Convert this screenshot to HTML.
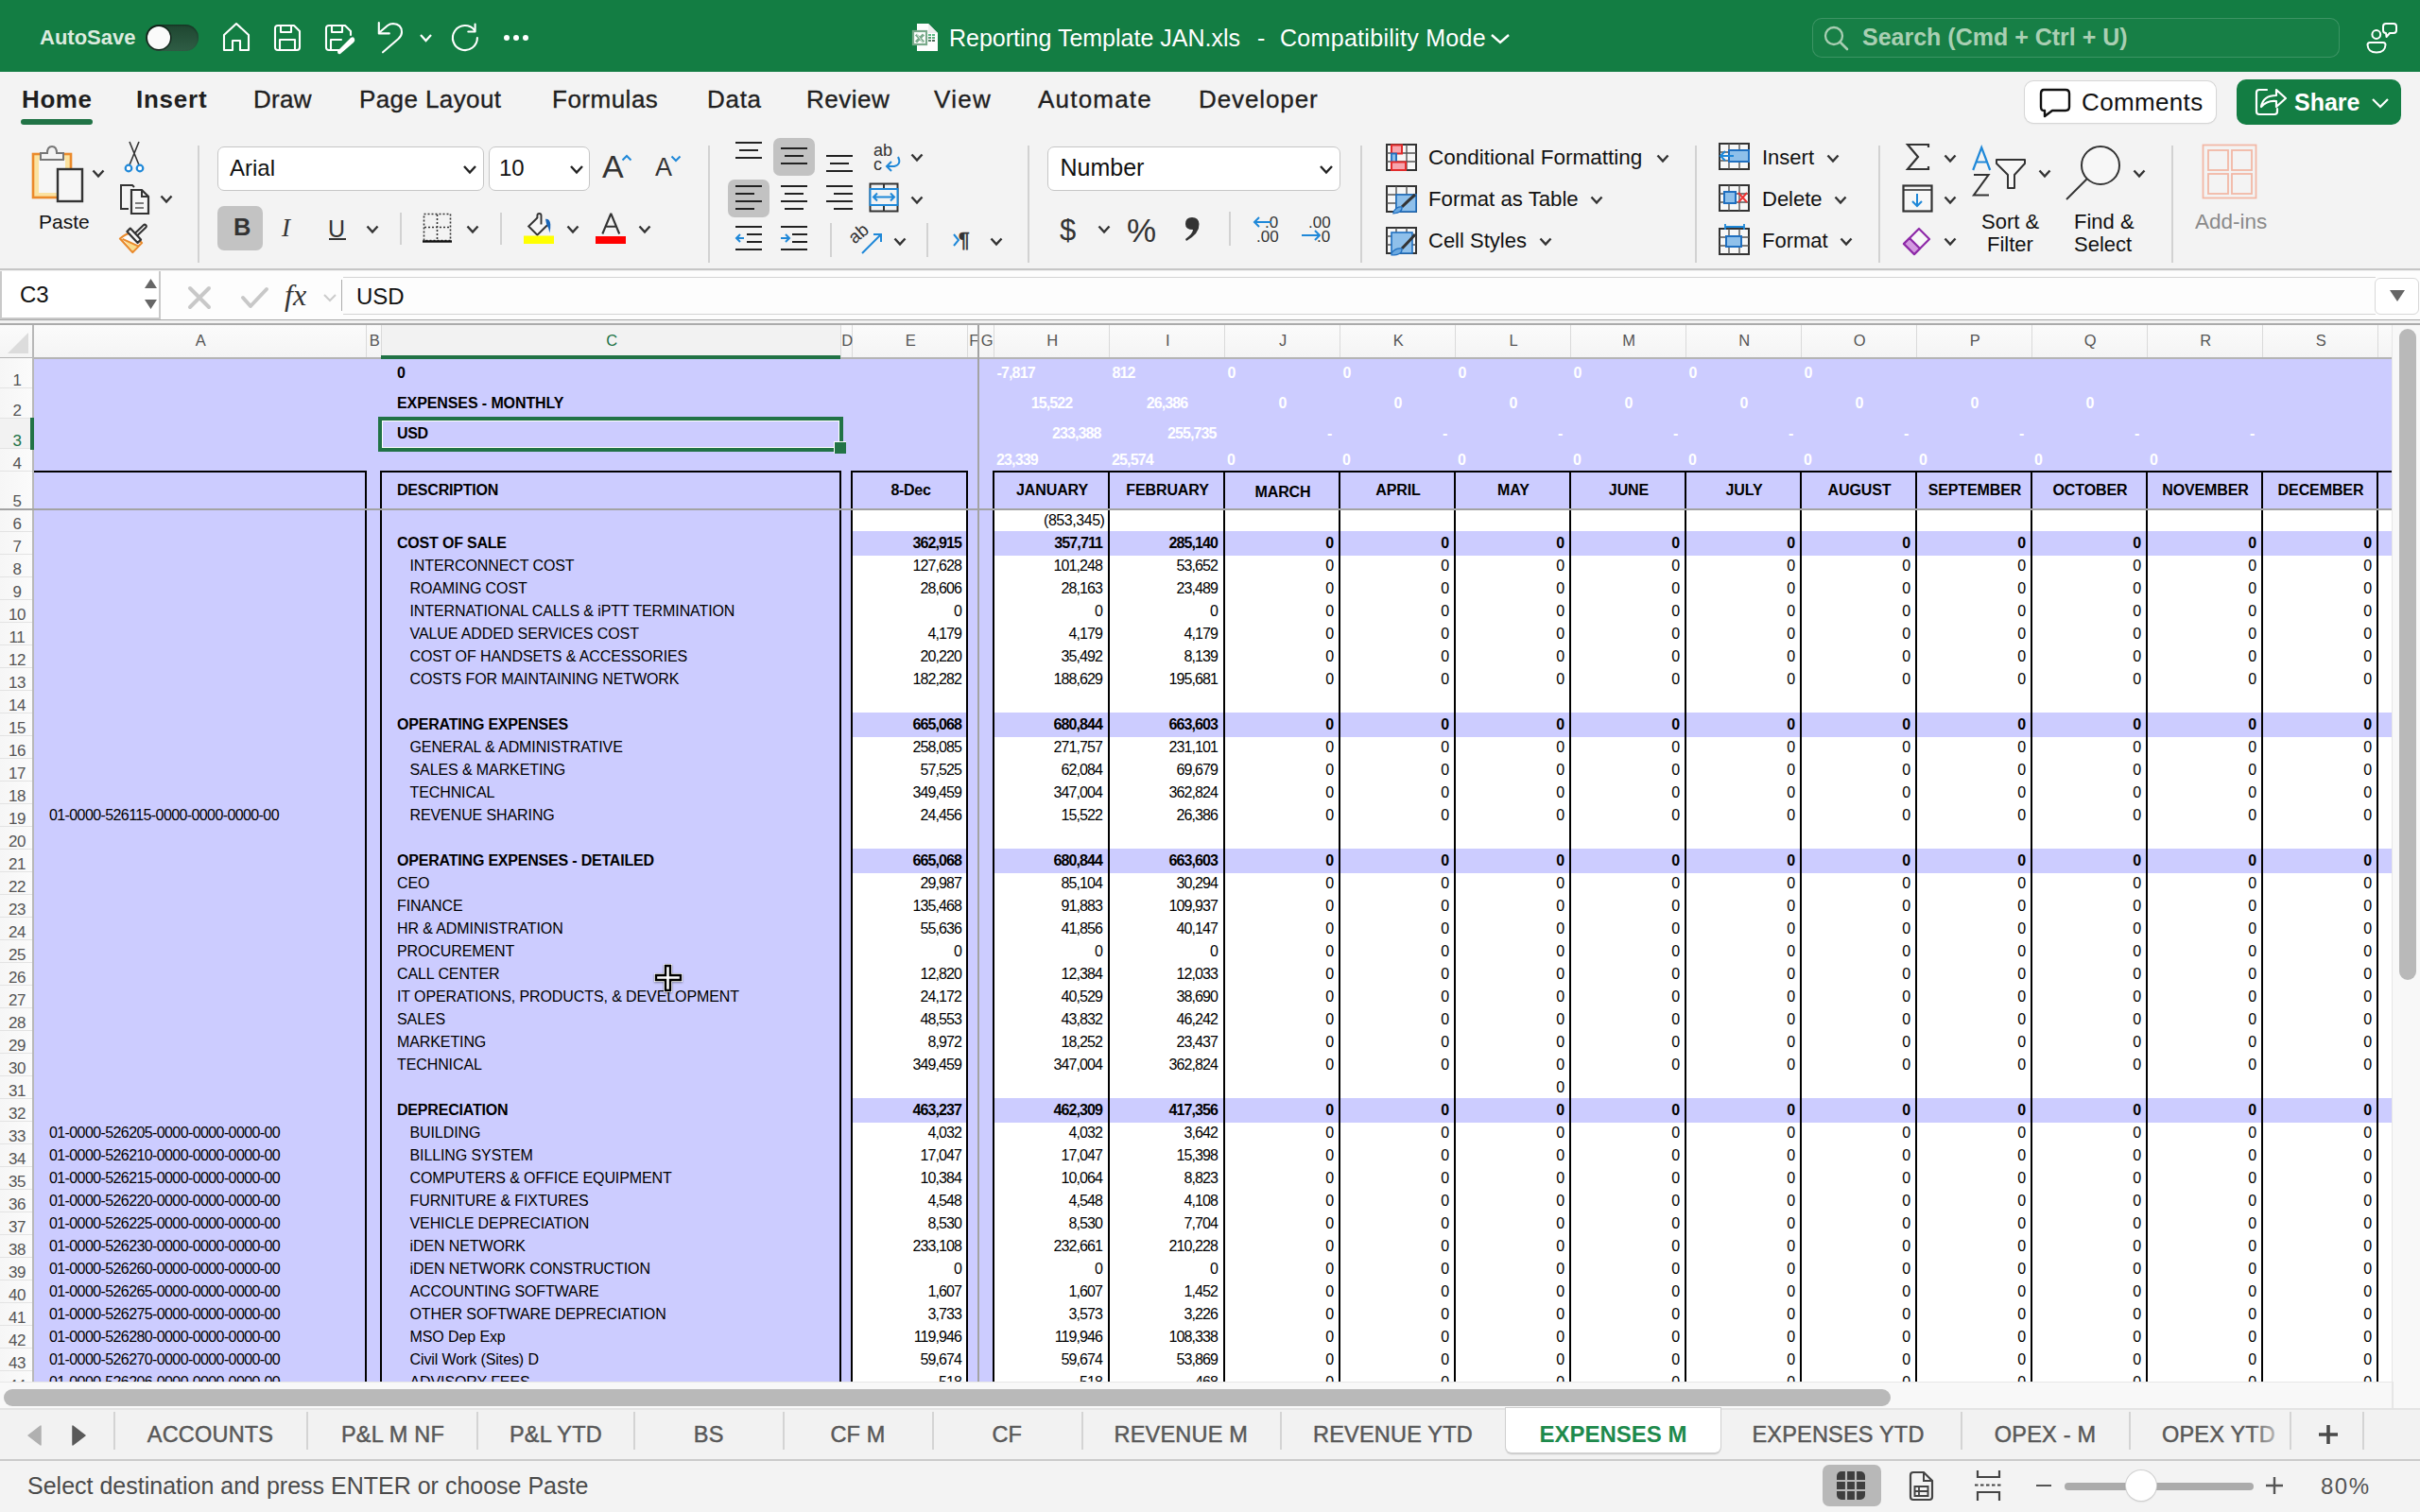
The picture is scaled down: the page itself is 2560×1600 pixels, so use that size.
<!DOCTYPE html><html><head><meta charset="utf-8"><style>
html,body{margin:0;padding:0;width:2560px;height:1600px;overflow:hidden;background:#f3f3f3;font-family:"Liberation Sans", sans-serif;}
.t{position:absolute;white-space:pre;line-height:1;}
.r{position:absolute;}
.s{position:absolute;overflow:visible;}
</style></head><body>
<div class="r" style="left:0px;top:0px;width:2560px;height:76px;background:#137d43;"></div>
<div class="t" style="top:29.41px;font-size:22px;font-weight:bold;color:#dcebdf;left:42.00px;">AutoSave</div>
<div class="r" style="left:154px;top:26px;width:56px;height:28px;background:linear-gradient(#1e4630,#2f5d45);border-radius:14px;box-shadow:inset 0 1px 2px rgba(0,0,0,.35);"></div>
<div class="r" style="left:156px;top:28px;width:24px;height:24px;background:#fafafa;border-radius:12px;box-shadow:0 0 0 1.5px rgba(0,0,0,.55);"></div>
<svg class="s" style="left:234px;top:22px;" width="32" height="34" viewBox="0 0 32 34"><path fill="none" stroke="#fff" stroke-width="2.1" stroke-linejoin="round" stroke-linecap="round" d="M3 15 L16 3 L29 15 V31 H20 V21 H12 V31 H3 Z"/></svg>
<svg class="s" style="left:289px;top:25px;" width="30" height="30" viewBox="0 0 30 30"><path fill="none" stroke="#fff" stroke-width="2.1" stroke-linejoin="round" stroke-linecap="round" d="M2 5 Q2 2 5 2 H22 L28 8 V25 Q28 28 25 28 H5 Q2 28 2 25 Z"/><path fill="none" stroke="#fff" stroke-width="2.1" stroke-linejoin="round" stroke-linecap="round" d="M8 2 V9 H19 V2"/><path fill="none" stroke="#fff" stroke-width="2.1" stroke-linejoin="round" stroke-linecap="round" d="M7 28 V17 H23 V28"/></svg>
<svg class="s" style="left:343px;top:25px;" width="33" height="32" viewBox="0 0 33 32"><path fill="none" stroke="#fff" stroke-width="2.1" stroke-linejoin="round" stroke-linecap="round" d="M18 28 H5 Q2 28 2 25 V5 Q2 2 5 2 H22 L28 8 V12"/><path fill="none" stroke="#fff" stroke-width="2.1" stroke-linejoin="round" stroke-linecap="round" d="M8 2 V9 H19 V2"/><path fill="none" stroke="#fff" stroke-width="2.1" stroke-linejoin="round" stroke-linecap="round" d="M7 28 V17 H18"/><path d="M14 29 L28 15 Q31 13 32 16 Q33 18 31 20 L17 32 Q14 33 14 29Z" fill="#fff"/></svg>
<svg class="s" style="left:398px;top:22px;" width="30" height="36" viewBox="0 0 30 36"><path fill="none" stroke="#fff" stroke-width="2.1" stroke-linejoin="round" stroke-linecap="round" stroke-linecap="butt" stroke-linejoin="miter" d="M2.8 2 V13.4 H13.8"/><path fill="none" stroke="#fff" stroke-width="2.1" stroke-linejoin="round" stroke-linecap="round" d="M3.5 12.3 L12 5 Q14.5 3 17.8 3 Q27 3.5 27 12 Q27 16 23.5 19 L7 33.3"/></svg>
<svg class="s" style="left:443px;top:35px;" width="15" height="11" viewBox="0 0 15 11"><path d="M2 2 L7.5 8 L13 2" fill="none" stroke="#fff" stroke-width="2.2"/></svg>
<svg class="s" style="left:476px;top:23px;" width="32" height="33" viewBox="0 0 32 33"><path fill="none" stroke="#fff" stroke-width="2.1" stroke-linejoin="round" stroke-linecap="round" d="M28.9 17 A13 13 0 1 1 26.1 9.0"/><path fill="none" stroke="#fff" stroke-width="2.1" stroke-linejoin="round" stroke-linecap="round" stroke-linecap="butt" stroke-linejoin="miter" d="M26.6 2.5 V10.5 H19.3"/></svg>
<svg class="s" style="left:532px;top:36px;" width="28" height="8" viewBox="0 0 28 8"><circle cx="4" cy="4" r="3" fill="#fff"/><circle cx="14" cy="4" r="3" fill="#fff"/><circle cx="24" cy="4" r="3" fill="#fff"/></svg>
<svg class="s" style="left:964px;top:24px;" width="30" height="31" viewBox="0 0 30 31"><path d="M6 1 H18 L28 11 V30 H6 Z" fill="#fdfdfd"/><path d="M18 1 V11 H28" fill="#eeeeee"/><rect x="2" y="9" width="14" height="14" fill="#fff" stroke="#79a98a" stroke-width="2.2"/><path d="M5 12.5 L13 20.5 M13 12.5 L5 20.5" stroke="#79a98a" stroke-width="3"/><path d="M6 12 L12 21" stroke="#fff" stroke-width="0.8"/><rect x="18" y="12" width="3" height="2" fill="#5cb784"/><rect x="22" y="12" width="3" height="2" fill="#5cb784"/><rect x="18" y="15" width="3" height="2" fill="#5d9c74"/><rect x="22" y="15" width="3" height="2" fill="#5cae7e"/><rect x="18" y="18" width="3" height="2" fill="#567f66"/><rect x="22" y="18" width="3" height="2" fill="#4d6b59"/></svg>
<div class="t" style="top:27.88px;font-size:25px;font-weight:normal;color:#fff;left:1004.00px;">Reporting Template JAN.xls</div>
<div class="t" style="top:27.88px;font-size:25px;font-weight:normal;color:#fff;left:1330.00px;">-</div>
<div class="t" style="top:27.88px;font-size:25px;font-weight:normal;color:#fff;letter-spacing:0.3px;left:1354.00px;">Compatibility Mode</div>
<svg class="s" style="left:1576px;top:35px;" width="22" height="12" viewBox="0 0 22 12"><path d="M2 2 L11 10 L20 2" fill="none" stroke="#fff" stroke-width="2.4"/></svg>
<div class="r" style="left:1917px;top:19px;width:558px;height:42px;background:rgba(255,255,255,0.02);border:1px solid rgba(255,255,255,0.16);border-radius:10px;box-sizing:border-box;"></div>
<svg class="s" style="left:1929px;top:27px;" width="27" height="28" viewBox="0 0 27 28"><circle cx="11" cy="11" r="9" fill="none" stroke="#a8cdb2" stroke-width="2.3"/><path d="M17.5 17.5 L25 25" stroke="#a8cdb2" stroke-width="2.6" stroke-linecap="round"/></svg>
<div class="t" style="top:26.88px;font-size:25px;font-weight:bold;color:#a9cfb3;left:1970.00px;">Search (Cmd + Ctrl + U)</div>
<svg class="s" style="left:2503px;top:23px;" width="34" height="34" viewBox="0 0 34 34"><circle cx="10.8" cy="13.5" r="4.4" fill="none" stroke="#fff" stroke-width="2"/><path d="M4 22 H18 Q20.5 22 20.5 24.5 Q20 32.5 11 32.5 Q2 32.5 1.5 24.5 Q1.5 22 4 22Z" fill="none" stroke="#fff" stroke-width="2" stroke-linejoin="round"/><path d="M21 2 H29 Q32 2 32 5 V9 Q32 12 29 12 H25 L21.5 16 L21 12 Q18 12 18 9 V5 Q18 2 21 2Z" fill="none" stroke="#fff" stroke-width="2" stroke-linejoin="round"/></svg>
<div class="t" style="top:92.03px;font-size:26px;font-weight:bold;color:#1f1f1f;letter-spacing:0.6px;left:23.00px;">Home</div>
<div class="t" style="top:92.03px;font-size:26px;font-weight:bold;color:#1f1f1f;letter-spacing:0.75px;left:144.00px;">Insert</div>
<div class="t" style="top:92.03px;font-size:26px;font-weight:normal;color:#1f1f1f;letter-spacing:0.25px;left:268.00px;-webkit-text-stroke:0.35px #1f1f1f;">Draw</div>
<div class="t" style="top:92.03px;font-size:26px;font-weight:normal;color:#1f1f1f;letter-spacing:0.4px;left:380.00px;-webkit-text-stroke:0.35px #1f1f1f;">Page Layout</div>
<div class="t" style="top:92.03px;font-size:26px;font-weight:normal;color:#1f1f1f;letter-spacing:0.5px;left:584.00px;-webkit-text-stroke:0.35px #1f1f1f;">Formulas</div>
<div class="t" style="top:92.03px;font-size:26px;font-weight:normal;color:#1f1f1f;letter-spacing:0.7px;left:748.00px;-webkit-text-stroke:0.35px #1f1f1f;">Data</div>
<div class="t" style="top:92.03px;font-size:26px;font-weight:normal;color:#1f1f1f;letter-spacing:0.5px;left:853.00px;-webkit-text-stroke:0.35px #1f1f1f;">Review</div>
<div class="t" style="top:92.03px;font-size:26px;font-weight:normal;color:#1f1f1f;letter-spacing:1.3px;left:988.00px;-webkit-text-stroke:0.35px #1f1f1f;">View</div>
<div class="t" style="top:92.03px;font-size:26px;font-weight:normal;color:#1f1f1f;letter-spacing:1.2px;left:1098.00px;-webkit-text-stroke:0.35px #1f1f1f;">Automate</div>
<div class="t" style="top:92.03px;font-size:26px;font-weight:normal;color:#1f1f1f;letter-spacing:0.9px;left:1268.00px;-webkit-text-stroke:0.35px #1f1f1f;">Developer</div>
<div class="r" style="left:22px;top:126px;width:76px;height:6px;background:#217346;border-radius:3px;"></div>
<div class="r" style="left:2142px;top:86px;width:202px;height:44px;background:#fff;border-radius:9px;box-shadow:0 0 0 1px #d6d6d6, 0 1px 2px rgba(0,0,0,.12);"></div>
<svg class="s" style="left:2157px;top:93px;" width="35" height="32" viewBox="0 0 35 32"><path d="M5 2 H28 Q32 2 32 6 V20 Q32 24 28 24 H14 L6 30 V24 H5 Q2 24 2 20 V6 Q2 2 5 2Z" fill="none" stroke="#111" stroke-width="2.4" stroke-linejoin="round"/></svg>
<div class="t" style="top:95.03px;font-size:26px;font-weight:normal;color:#111;letter-spacing:0.35px;left:2202.00px;">Comments</div>
<div class="r" style="left:2366px;top:84px;width:174px;height:48px;background:#137d43;border-radius:10px;"></div>
<svg class="s" style="left:2384px;top:91px;" width="36" height="32" viewBox="0 0 36 32"><path d="M14 4 H6 Q3 4 3 7 V27 Q3 30 6 30 H22 Q25 30 25 27 V24" fill="none" stroke="#fff" stroke-width="2.2" stroke-linecap="round"/><path d="M8 22 Q10 10 24 10 V4 L34 13 L24 22 V16 Q14 15 8 22Z" fill="none" stroke="#fff" stroke-width="2.2" stroke-linejoin="round"/></svg>
<div class="t" style="top:95.88px;font-size:25px;font-weight:bold;color:#fff;left:2427.00px;">Share</div>
<svg class="s" style="left:2508px;top:103px;" width="20" height="12" viewBox="0 0 20 12"><path d="M2 2 L10 10 L18 2" fill="none" stroke="#fff" stroke-width="2.2"/></svg>
<div class="r" style="left:209px;top:154px;width:2px;height:124px;background:#d2d2d2;"></div>
<div class="r" style="left:749px;top:154px;width:2px;height:124px;background:#d2d2d2;"></div>
<div class="r" style="left:1087px;top:154px;width:2px;height:124px;background:#d2d2d2;"></div>
<div class="r" style="left:1439px;top:154px;width:2px;height:124px;background:#d2d2d2;"></div>
<div class="r" style="left:1793px;top:154px;width:2px;height:124px;background:#d2d2d2;"></div>
<div class="r" style="left:1987px;top:154px;width:2px;height:124px;background:#d2d2d2;"></div>
<div class="r" style="left:2297px;top:154px;width:2px;height:124px;background:#d2d2d2;"></div>
<svg class="s" style="left:33px;top:153px;" width="56" height="62" viewBox="0 0 56 62"><rect x="2" y="10" width="40" height="46" fill="#fbe2a0" stroke="#eb8a2b" stroke-width="2.6"/><rect x="8" y="16" width="28" height="35" fill="#f6f6f6"/><path d="M10 16 V9 H17 Q17 2 22 2 Q27 2 27 9 H34 V16 Z" fill="#f4f4f4" stroke="#777" stroke-width="2"/><rect x="28" y="26" width="26" height="34" fill="#f6f6f6" stroke="#333" stroke-width="2.4"/></svg>
<svg class="s" style="left:97px;top:179px;" width="14" height="10" viewBox="0 0 14 10"><path d="M1.5 1.5 L7 7.5 L12.5 1.5" fill="none" stroke="#333" stroke-width="2.4"/></svg>
<div class="t" style="top:223.95px;font-size:21px;font-weight:normal;color:#111;left:41.00px;">Paste</div>
<svg class="s" style="left:131px;top:149px;" width="22" height="34" viewBox="0 0 22 34"><path d="M5 28 L16 1 M17 28 L6 1" stroke="#333" stroke-width="1.6" fill="none"/><circle cx="5" cy="29" r="3.3" fill="#fff" stroke="#1f88d8" stroke-width="2.2"/><circle cx="17" cy="29" r="3.3" fill="#fff" stroke="#1f88d8" stroke-width="2.2"/></svg>
<svg class="s" style="left:125px;top:193px;" width="35" height="34" viewBox="0 0 35 34"><path d="M11 28 H3 V3 H15 L17 5" fill="none" stroke="#333" stroke-width="2"/><path d="M14 8 H25 L32 15 V33 H14 Z" fill="#f7f7f7" stroke="#333" stroke-width="2.2"/><path d="M25 8 V15 H32" fill="none" stroke="#333" stroke-width="2"/><path d="M18 22 H27 M18 27 H27" stroke="#555" stroke-width="1.6"/></svg>
<svg class="s" style="left:169px;top:206px;" width="14" height="10" viewBox="0 0 14 10"><path d="M1.5 1.5 L7 7.5 L12.5 1.5" fill="none" stroke="#333" stroke-width="2.4"/></svg>
<svg class="s" style="left:125px;top:237px;" width="34" height="34" viewBox="0 0 34 34"><path d="M2 15.5 Q8 10 14.5 9.5 L25 20 L15.3 30 Z" fill="#fbfbfb" stroke="#e98a2c" stroke-width="2.2" stroke-linejoin="round"/><path d="M5.5 16.5 L20.5 23.5 L15.3 28.5 Z" fill="#f9dc8c"/><path d="M4.5 15.8 L21 23.3" stroke="#e98a2c" stroke-width="2"/><path d="M18 12 L28 2.5" stroke="#333" stroke-width="5.5" stroke-linecap="round"/><path d="M18 12 L28 2.5" stroke="#f7f7f7" stroke-width="1.4" stroke-linecap="round"/><path d="M9.4 8 L12.8 4.6 L24 16.6 L20.6 20 Z" fill="#f7f7f7" stroke="#333" stroke-width="2.2" stroke-linejoin="round"/></svg>
<div class="r" style="left:230px;top:154.5px;width:282px;height:47px;background:#fff;border:1.5px solid #c6c6c6;border-radius:7px;box-sizing:border-box;"></div>
<div class="t" style="top:165.72px;font-size:24px;font-weight:normal;color:#111;left:243.00px;">Arial</div>
<svg class="s" style="left:489px;top:174px;" width="16" height="11" viewBox="0 0 16 11"><path d="M2 2 L8 8.5 L14 2" fill="none" stroke="#222" stroke-width="2.4"/></svg>
<div class="r" style="left:516.5px;top:154.5px;width:107px;height:47px;background:#fff;border:1.5px solid #c6c6c6;border-radius:7px;box-sizing:border-box;"></div>
<div class="t" style="top:165.72px;font-size:24px;font-weight:normal;color:#111;left:528.00px;">10</div>
<svg class="s" style="left:602px;top:174px;" width="16" height="11" viewBox="0 0 16 11"><path d="M2 2 L8 8.5 L14 2" fill="none" stroke="#222" stroke-width="2.4"/></svg>
<div class="t" style="top:158.57px;font-size:34px;font-weight:normal;color:#333;left:637.00px;">A</div>
<svg class="s" style="left:657px;top:163px;" width="12" height="8" viewBox="0 0 12 8"><path d="M1.5 6.5 L6 2 L10.5 6.5" fill="none" stroke="#1f88d8" stroke-width="2"/></svg>
<div class="t" style="top:164.49px;font-size:27px;font-weight:normal;color:#333;left:693.00px;">A</div>
<svg class="s" style="left:709px;top:164px;" width="12" height="8" viewBox="0 0 12 8"><path d="M1.5 1.5 L6 6 L10.5 1.5" fill="none" stroke="#1f88d8" stroke-width="2"/></svg>
<div class="r" style="left:230px;top:218px;width:48px;height:47px;background:#c3c3c3;border-radius:7px;"></div>
<div class="t" style="top:228.05px;font-size:25.5px;font-weight:bold;color:#333;letter-spacing:-0.5px;left:247.00px;">B</div>
<div class="t" style="top:228.19px;font-size:27px;font-weight:normal;color:#333;left:298.00px;font-family:'Liberation Serif',serif;"><i>I</i></div>
<div class="t" style="top:229.88px;font-size:25px;font-weight:normal;color:#333;left:347.00px;">U</div>
<div class="r" style="left:348px;top:251.5px;width:18px;height:2px;background:#333;"></div>
<svg class="s" style="left:387px;top:238px;" width="14" height="10" viewBox="0 0 14 10"><path d="M1.5 1.5 L7 7.5 L12.5 1.5" fill="none" stroke="#333" stroke-width="2.4"/></svg>
<div class="r" style="left:423px;top:225px;width:2px;height:34px;background:#d2d2d2;"></div>
<svg class="s" style="left:447px;top:225px;" width="32" height="32" viewBox="0 0 32 32"><rect x="1.5" y="1.5" width="28" height="28" fill="none" stroke="#333" stroke-width="1.6" stroke-dasharray="2 2"/><path d="M15.5 2 V30 M2 15.5 H30" stroke="#333" stroke-width="1.6" stroke-dasharray="2 2"/><path d="M0 30.5 H31" stroke="#111" stroke-width="2.4"/></svg>
<svg class="s" style="left:493px;top:238px;" width="14" height="10" viewBox="0 0 14 10"><path d="M1.5 1.5 L7 7.5 L12.5 1.5" fill="none" stroke="#333" stroke-width="2.4"/></svg>
<div class="r" style="left:529px;top:225px;width:2px;height:34px;background:#d2d2d2;"></div>
<svg class="s" style="left:553px;top:225px;" width="34" height="34" viewBox="0 0 34 34"><path d="M15.4 5.5 L6.2 14.5 L15.4 23.7 L26 13.2" fill="#f7f7f7" stroke="#333" stroke-width="2"/><path d="M15.4 6 V3 Q15.4 1 17.5 1 Q19.5 1 19.5 3 V12.5" fill="none" stroke="#333" stroke-width="1.9"/><path d="M24 6.8 Q28.8 6.2 29.3 12.5 Q29.6 17 28.3 21.5 Q27.8 16.5 25.2 12.5 Z" fill="#1a66b8"/><rect x="1" y="24.5" width="32" height="8.5" fill="#ffff00"/></svg>
<svg class="s" style="left:599px;top:238px;" width="14" height="10" viewBox="0 0 14 10"><path d="M1.5 1.5 L7 7.5 L12.5 1.5" fill="none" stroke="#333" stroke-width="2.4"/></svg>
<svg class="s" style="left:630px;top:224px;" width="34" height="26" viewBox="0 0 34 26"><path d="M7.3 23.5 L16.3 2 L25.2 23.5 M10.4 15.8 H22.2" fill="none" stroke="#333" stroke-width="2.1" stroke-linejoin="bevel"/></svg>
<div class="r" style="left:630px;top:249.5px;width:32px;height:8.5px;background:#ff0000;"></div>
<svg class="s" style="left:675px;top:238px;" width="14" height="10" viewBox="0 0 14 10"><path d="M1.5 1.5 L7 7.5 L12.5 1.5" fill="none" stroke="#333" stroke-width="2.4"/></svg>
<div class="r" style="left:818px;top:146px;width:44px;height:40px;background:#c2c2c2;border-radius:7px;"></div>
<div class="r" style="left:770px;top:190px;width:44px;height:40px;background:#c2c2c2;border-radius:7px;"></div>
<svg class="s" style="left:778px;top:150px;" width="30" height="26" viewBox="0 0 30 26"><rect x="0" y="0" width="28" height="2" fill="#222"/><rect x="4" y="8" width="20" height="2" fill="#222"/><rect x="0" y="16" width="28" height="2" fill="#222"/></svg>
<svg class="s" style="left:826px;top:156px;" width="30" height="26" viewBox="0 0 30 26"><rect x="0" y="0" width="28" height="2" fill="#222"/><rect x="4" y="8" width="20" height="2" fill="#222"/><rect x="0" y="16" width="28" height="2" fill="#222"/></svg>
<svg class="s" style="left:874px;top:164px;" width="30" height="26" viewBox="0 0 30 26"><rect x="0" y="0" width="28" height="2" fill="#222"/><rect x="4" y="8" width="20" height="2" fill="#222"/><rect x="0" y="16" width="28" height="2" fill="#222"/></svg>
<svg class="s" style="left:778px;top:196px;" width="30" height="34" viewBox="0 0 30 34"><rect x="0" y="0" width="28" height="2" fill="#222"/><rect x="0" y="8" width="20" height="2" fill="#222"/><rect x="0" y="16" width="28" height="2" fill="#222"/><rect x="0" y="24" width="20" height="2" fill="#222"/></svg>
<svg class="s" style="left:826px;top:196px;" width="30" height="34" viewBox="0 0 30 34"><rect x="0" y="0" width="28" height="2" fill="#222"/><rect x="4" y="8" width="20" height="2" fill="#222"/><rect x="0" y="16" width="28" height="2" fill="#222"/><rect x="4" y="24" width="20" height="2" fill="#222"/></svg>
<svg class="s" style="left:874px;top:196px;" width="30" height="34" viewBox="0 0 30 34"><rect x="0" y="0" width="28" height="2" fill="#222"/><rect x="8" y="8" width="20" height="2" fill="#222"/><rect x="0" y="16" width="28" height="2" fill="#222"/><rect x="8" y="24" width="20" height="2" fill="#222"/></svg>
<div class="t" style="top:149.79px;font-size:18px;font-weight:normal;color:#333;left:924.00px;">ab</div>
<div class="t" style="top:164.79px;font-size:18px;font-weight:normal;color:#333;left:924.00px;">c</div>
<svg class="s" style="left:935px;top:165px;" width="20" height="20" viewBox="0 0 20 20"><path d="M15 1 Q19 9 11 11 H4" fill="none" stroke="#1f88d8" stroke-width="2"/><path d="M8 6 L3 11 L8 16" fill="none" stroke="#1f88d8" stroke-width="2"/></svg>
<svg class="s" style="left:963px;top:162px;" width="14" height="10" viewBox="0 0 14 10"><path d="M1.5 1.5 L7 7.5 L12.5 1.5" fill="none" stroke="#333" stroke-width="2.4"/></svg>
<svg class="s" style="left:919px;top:193px;" width="32" height="32" viewBox="0 0 32 32"><rect x="1.5" y="1.5" width="29" height="29" fill="none" stroke="#333" stroke-width="2"/><path d="M16 1 V31" stroke="#333" stroke-width="2"/><rect x="1.5" y="7" width="29" height="17" fill="#f3f3f3" stroke="#1f88d8" stroke-width="2"/><path d="M5 15.5 H27 M9 11.5 L5 15.5 L9 19.5 M23 11.5 L27 15.5 L23 19.5" fill="none" stroke="#1f88d8" stroke-width="2"/></svg>
<svg class="s" style="left:963px;top:207px;" width="14" height="10" viewBox="0 0 14 10"><path d="M1.5 1.5 L7 7.5 L12.5 1.5" fill="none" stroke="#333" stroke-width="2.4"/></svg>
<svg class="s" style="left:778px;top:239px;" width="30" height="28" viewBox="0 0 30 28"><rect x="0" y="0" width="28" height="2" fill="#222"/><rect x="12" y="8" width="16" height="2" fill="#222"/><rect x="12" y="16" width="16" height="2" fill="#222"/><rect x="0" y="24" width="28" height="2" fill="#222"/><path d="M9 13 H1 M5 9 L1 13 L5 17" fill="none" stroke="#1f88d8" stroke-width="2"/></svg>
<svg class="s" style="left:826px;top:239px;" width="30" height="28" viewBox="0 0 30 28"><rect x="0" y="0" width="28" height="2" fill="#222"/><rect x="12" y="8" width="16" height="2" fill="#222"/><rect x="12" y="16" width="16" height="2" fill="#222"/><rect x="0" y="24" width="28" height="2" fill="#222"/><path d="M0 13 H9 M5 9 L9 13 L5 17" fill="none" stroke="#1f88d8" stroke-width="2"/></svg>
<div class="r" style="left:878px;top:236px;width:2px;height:36px;background:#d2d2d2;"></div>
<div class="t" style="top:241.94px;font-size:19px;font-weight:normal;color:#333;left:906.00px;transform:rotate(-40deg);transform-origin:left bottom;">ab</div>
<svg class="s" style="left:910px;top:244px;" width="26" height="26" viewBox="0 0 26 26"><path d="M2 24 L22 4 M14 4 H22 V12" fill="none" stroke="#1f88d8" stroke-width="2"/></svg>
<svg class="s" style="left:945px;top:251px;" width="14" height="10" viewBox="0 0 14 10"><path d="M1.5 1.5 L7 7.5 L12.5 1.5" fill="none" stroke="#333" stroke-width="2.4"/></svg>
<div class="r" style="left:980px;top:236px;width:2px;height:36px;background:#d2d2d2;"></div>
<svg class="s" style="left:1007px;top:245px;" width="28" height="18" viewBox="0 0 28 18"><path d="M2 3 L7 9 L2 15" fill="none" stroke="#1f88d8" stroke-width="2"/></svg>
<div class="t" style="top:242.91px;font-size:22px;font-weight:normal;color:#333;left:1014.00px;-webkit-text-stroke:0.6px #333;">¶</div>
<svg class="s" style="left:1047px;top:251px;" width="14" height="10" viewBox="0 0 14 10"><path d="M1.5 1.5 L7 7.5 L12.5 1.5" fill="none" stroke="#333" stroke-width="2.4"/></svg>
<div class="r" style="left:1108px;top:154.5px;width:310px;height:47px;background:#fff;border:1.5px solid #c6c6c6;border-radius:7px;box-sizing:border-box;"></div>
<div class="t" style="top:165.18px;font-size:25px;font-weight:normal;color:#111;left:1121.50px;">Number</div>
<svg class="s" style="left:1395px;top:174px;" width="16" height="11" viewBox="0 0 16 11"><path d="M2 2 L8 8.5 L14 2" fill="none" stroke="#222" stroke-width="2.4"/></svg>
<div class="t" style="top:227.81px;font-size:31px;font-weight:normal;color:#333;left:1121.00px;">$</div>
<svg class="s" style="left:1161px;top:238px;" width="14" height="10" viewBox="0 0 14 10"><path d="M1.5 1.5 L7 7.5 L12.5 1.5" fill="none" stroke="#333" stroke-width="2.4"/></svg>
<div class="t" style="top:226.12px;font-size:35px;font-weight:normal;color:#333;left:1192.00px;font-weight:300;">%</div>
<svg class="s" style="left:1253px;top:229px;" width="17" height="27" viewBox="0 0 17 27"><path d="M8 1 Q15 1 15.5 8 Q16 18 2 26 L1 24 Q9 18 9 14 Q1 14 1 8 Q1 1 8 1Z" fill="#333"/></svg>
<div class="r" style="left:1300px;top:224px;width:2px;height:36px;background:#d2d2d2;"></div>
<div class="t" style="top:226.63px;font-size:17px;font-weight:normal;color:#333;left:1338.00px;">.0</div>
<div class="t" style="top:241.63px;font-size:17px;font-weight:normal;color:#333;left:1329.00px;">.00</div>
<svg class="s" style="left:1325px;top:228px;" width="22" height="14" viewBox="0 0 22 14"><path d="M20 7 H2 M7 2 L2 7 L7 12" fill="none" stroke="#1f88d8" stroke-width="2"/></svg>
<div class="t" style="top:226.63px;font-size:17px;font-weight:normal;color:#333;left:1384.00px;">.00</div>
<div class="t" style="top:241.63px;font-size:17px;font-weight:normal;color:#333;left:1393.00px;">.0</div>
<svg class="s" style="left:1377px;top:242px;" width="22" height="14" viewBox="0 0 22 14"><path d="M0 7 H19 M14 2 L19 7 L14 12" fill="none" stroke="#1f88d8" stroke-width="2"/></svg>
<svg class="s" style="left:1465.5px;top:152px;" width="34" height="30" viewBox="0 0 34 30"><rect x="1" y="1" width="31" height="27" fill="#f7f7f7" stroke="#333" stroke-width="2"/><path d="M11 1 V28 M22 1 V28 M1 10 H32 M1 19 H32" stroke="#555" stroke-width="1.4"/><rect x="6" y="1.5" width="11" height="9" fill="#f7a5ad" stroke="#e32b2b" stroke-width="2"/><rect x="6" y="10.5" width="5" height="9" fill="#8fc0ea" stroke="#1f6fc0" stroke-width="1.8"/><rect x="6" y="19.5" width="15" height="8.5" fill="#f7a5ad" stroke="#e32b2b" stroke-width="2"/></svg>
<div class="t" style="top:155.99px;font-size:22.5px;font-weight:normal;color:#111;left:1511.00px;">Conditional Formatting</div>
<svg class="s" style="left:1752px;top:163px;" width="14" height="10" viewBox="0 0 14 10"><path d="M1.5 1.5 L7 7.5 L12.5 1.5" fill="none" stroke="#333" stroke-width="2.4"/></svg>
<svg class="s" style="left:1465.5px;top:196px;" width="34" height="30" viewBox="0 0 34 30"><rect x="1" y="1" width="31" height="27" fill="#f7f7f7" stroke="#333" stroke-width="2"/><path d="M11 1 V28 M22 1 V28 M1 10 H32 M1 19 H32" stroke="#555" stroke-width="1.4"/><rect x="11" y="10" width="21" height="18" fill="#8fc0ea" stroke="#1f6fc0" stroke-width="1.6"/><path d="M31 10 Q24 16 17 23" stroke="#333" stroke-width="3" fill="none"/><path d="M8 28 Q12 22 17 23 Q18 29 8 30Z" fill="#6aa8e0" stroke="#1f6fc0" stroke-width="1.2"/></svg>
<div class="t" style="top:199.74px;font-size:22.2px;font-weight:normal;color:#111;left:1511.00px;">Format as Table</div>
<svg class="s" style="left:1682px;top:207px;" width="14" height="10" viewBox="0 0 14 10"><path d="M1.5 1.5 L7 7.5 L12.5 1.5" fill="none" stroke="#333" stroke-width="2.4"/></svg>
<svg class="s" style="left:1465.5px;top:240px;" width="34" height="30" viewBox="0 0 34 30"><rect x="1" y="1" width="31" height="27" fill="#f7f7f7" stroke="#333" stroke-width="2"/><path d="M11 1 V28 M22 1 V28 M1 10 H32 M1 19 H32" stroke="#555" stroke-width="1.4"/><rect x="6" y="6" width="22" height="22" fill="#8fc0ea" stroke="#1f6fc0" stroke-width="1.6"/><path d="M31 8 Q24 16 17 23" stroke="#333" stroke-width="3" fill="none"/><path d="M6 28 Q10 22 17 23 Q18 30 6 30Z" fill="#6aa8e0" stroke="#1f6fc0" stroke-width="1.2"/></svg>
<div class="t" style="top:244.21px;font-size:22px;font-weight:normal;color:#111;left:1511.00px;">Cell Styles</div>
<svg class="s" style="left:1628px;top:251px;" width="14" height="10" viewBox="0 0 14 10"><path d="M1.5 1.5 L7 7.5 L12.5 1.5" fill="none" stroke="#333" stroke-width="2.4"/></svg>
<svg class="s" style="left:1818px;top:151px;" width="34" height="30" viewBox="0 0 34 30"><rect x="1" y="1" width="31" height="27" fill="#f7f7f7" stroke="#333" stroke-width="2"/><path d="M11 1 V28 M22 1 V28 M1 10 H32 M1 19 H32" stroke="#555" stroke-width="1.4"/><rect x="11" y="8" width="21" height="12" fill="#8fc0ea" stroke="#1f6fc0" stroke-width="2"/><path d="M16 14 H2 M7 9 L2 14 L7 19" fill="none" stroke="#1f88d8" stroke-width="2"/></svg>
<div class="t" style="top:156.41px;font-size:22px;font-weight:normal;color:#111;left:1864.00px;">Insert</div>
<svg class="s" style="left:1932px;top:163px;" width="14" height="10" viewBox="0 0 14 10"><path d="M1.5 1.5 L7 7.5 L12.5 1.5" fill="none" stroke="#333" stroke-width="2.4"/></svg>
<svg class="s" style="left:1818px;top:195px;" width="34" height="30" viewBox="0 0 34 30"><rect x="1" y="1" width="31" height="27" fill="#f7f7f7" stroke="#333" stroke-width="2"/><path d="M11 1 V28 M22 1 V28 M1 10 H32 M1 19 H32" stroke="#555" stroke-width="1.4"/><rect x="6" y="8" width="12" height="12" fill="#8fc0ea" stroke="#1f6fc0" stroke-width="2"/><path d="M21 9 L30 19 M30 9 L21 19" stroke="#e33" stroke-width="2"/></svg>
<div class="t" style="top:200.11px;font-size:22px;font-weight:normal;color:#111;left:1864.00px;">Delete</div>
<svg class="s" style="left:1940px;top:207px;" width="14" height="10" viewBox="0 0 14 10"><path d="M1.5 1.5 L7 7.5 L12.5 1.5" fill="none" stroke="#333" stroke-width="2.4"/></svg>
<svg class="s" style="left:1818px;top:241px;" width="34" height="30" viewBox="0 0 34 30"><rect x="1" y="1" width="31" height="27" fill="#f7f7f7" stroke="#333" stroke-width="2"/><path d="M11 1 V28 M22 1 V28 M1 10 H32 M1 19 H32" stroke="#555" stroke-width="1.4"/><rect x="8" y="9" width="16" height="11" fill="#8fc0ea" stroke="#1f6fc0" stroke-width="2"/></svg>
<svg class="s" style="left:1824px;top:237px;" width="22" height="6" viewBox="0 0 22 6"><path d="M1 0 V6 M21 0 V6 M1 3 H21" stroke="#1f88d8" stroke-width="1.8"/></svg>
<div class="t" style="top:244.41px;font-size:22px;font-weight:normal;color:#111;left:1864.00px;">Format</div>
<svg class="s" style="left:1946px;top:251px;" width="14" height="10" viewBox="0 0 14 10"><path d="M1.5 1.5 L7 7.5 L12.5 1.5" fill="none" stroke="#333" stroke-width="2.4"/></svg>
<svg class="s" style="left:2016px;top:151px;" width="26" height="30" viewBox="0 0 26 30"><path d="M24 5 V2 H2 L13 15 L2 28 H24 V25" fill="none" stroke="#333" stroke-width="2.2"/></svg>
<svg class="s" style="left:2056px;top:163px;" width="14" height="10" viewBox="0 0 14 10"><path d="M1.5 1.5 L7 7.5 L12.5 1.5" fill="none" stroke="#333" stroke-width="2.4"/></svg>
<svg class="s" style="left:2012px;top:195px;" width="34" height="30" viewBox="0 0 34 30"><rect x="1.5" y="1.5" width="30" height="27" fill="#f7f7f7" stroke="#333" stroke-width="2.2"/><path d="M1.5 6 H31.5" stroke="#333" stroke-width="1.6"/><path d="M16 10 V23 M11 18 L16 23 L21 18" fill="none" stroke="#1f88d8" stroke-width="2"/></svg>
<svg class="s" style="left:2056px;top:207px;" width="14" height="10" viewBox="0 0 14 10"><path d="M1.5 1.5 L7 7.5 L12.5 1.5" fill="none" stroke="#333" stroke-width="2.4"/></svg>
<svg class="s" style="left:2012px;top:238px;" width="34" height="32" viewBox="0 0 34 32"><path d="M2 20 L18 4 L29 15 L13 31 Z" fill="#f7f7f7" stroke="#8e2aa8" stroke-width="2.2" stroke-linejoin="round"/><path d="M2 20 L8 14 L19 25 L13 31 Z" fill="#d39ae0" stroke="#8e2aa8" stroke-width="2.2" stroke-linejoin="round"/></svg>
<svg class="s" style="left:2056px;top:251px;" width="14" height="10" viewBox="0 0 14 10"><path d="M1.5 1.5 L7 7.5 L12.5 1.5" fill="none" stroke="#333" stroke-width="2.4"/></svg>
<svg class="s" style="left:2086px;top:155px;" width="22" height="27" viewBox="0 0 22 27"><path d="M1.2 25 L10.2 1.2 L19.2 25 M4.6 16.5 H15.8" fill="none" stroke="#1f88d8" stroke-width="2.2" stroke-linejoin="miter"/></svg>
<svg class="s" style="left:2086px;top:183px;" width="20" height="26" viewBox="0 0 20 26"><path d="M2 2 H17.5 L2 23.5 H18" fill="none" stroke="#333" stroke-width="2.1"/></svg>
<svg class="s" style="left:2110px;top:167px;" width="34" height="34" viewBox="0 0 34 34"><path d="M2 2 H32 V6 L21 18 V32 H14 V18 L2 6 Z" fill="#f7f7f7" stroke="#333" stroke-width="2" stroke-linejoin="round"/></svg>
<svg class="s" style="left:2156px;top:179px;" width="14" height="10" viewBox="0 0 14 10"><path d="M1.5 1.5 L7 7.5 L12.5 1.5" fill="none" stroke="#333" stroke-width="2.4"/></svg>
<div class="t" style="top:224.41px;font-size:22px;font-weight:normal;color:#111;left:2096.00px;">Sort &amp;</div>
<div class="t" style="top:248.11px;font-size:22px;font-weight:normal;color:#111;left:2102.00px;">Filter</div>
<svg class="s" style="left:2184px;top:154px;" width="60" height="60" viewBox="0 0 60 60"><circle cx="38" cy="21" r="20" fill="#f7f7f7" stroke="#333" stroke-width="2"/><path d="M24 35 L2 57" stroke="#333" stroke-width="2"/></svg>
<svg class="s" style="left:2256px;top:179px;" width="14" height="10" viewBox="0 0 14 10"><path d="M1.5 1.5 L7 7.5 L12.5 1.5" fill="none" stroke="#333" stroke-width="2.4"/></svg>
<div class="t" style="top:224.41px;font-size:22px;font-weight:normal;color:#111;left:2194.00px;">Find &amp;</div>
<div class="t" style="top:248.11px;font-size:22px;font-weight:normal;color:#111;left:2194.00px;">Select</div>
<svg class="s" style="left:2329px;top:152px;" width="60" height="60" viewBox="0 0 60 60"><rect x="1.5" y="1.5" width="56" height="56" fill="none" stroke="#f2b8a6" stroke-width="1.8"/><rect x="7" y="7" width="21" height="21" fill="none" stroke="#f2b8a6" stroke-width="1.8"/><rect x="32" y="7" width="21" height="21" fill="none" stroke="#f2b8a6" stroke-width="1.8"/><rect x="7" y="32" width="21" height="21" fill="none" stroke="#f2b8a6" stroke-width="1.8"/><rect x="32" y="32" width="21" height="21" fill="none" stroke="#f2b8a6" stroke-width="1.8"/></svg>
<div class="t" style="top:223.99px;font-size:22.5px;font-weight:normal;color:#8a8a8a;left:2322.00px;">Add-ins</div>
<div class="r" style="left:0px;top:284px;width:2560px;height:2.2px;background:#c6c6c6;"></div>
<div class="r" style="left:0px;top:287px;width:2560px;height:51px;background:#fdfdfd;"></div>
<div class="r" style="left:0px;top:287px;width:170px;height:51px;background:#fff;border-left:2px solid #c9c9c9;border-right:2px solid #c9c9c9;border-bottom:2px solid #c9c9c9;box-sizing:border-box;"></div>
<div class="t" style="top:299.92px;font-size:24px;font-weight:normal;color:#111;left:21.00px;">C3</div>
<svg class="s" style="left:152px;top:294px;" width="16" height="34" viewBox="0 0 16 34"><path d="M1 11 L7.5 1 L14 11Z M1 23 L7.5 33 L14 23Z" fill="#666"/></svg>
<svg class="s" style="left:199px;top:303px;" width="24" height="24" viewBox="0 0 24 24"><path d="M2 2 L22 22 M22 2 L2 22" stroke="#c8c8c8" stroke-width="4" stroke-linecap="round"/></svg>
<svg class="s" style="left:255px;top:303px;" width="30" height="24" viewBox="0 0 30 24"><path d="M2 12 L10 21 L27 3" fill="none" stroke="#c8c8c8" stroke-width="4" stroke-linecap="round" stroke-linejoin="round"/></svg>
<div class="t" style="top:295.96px;font-size:32px;font-weight:normal;color:#333;left:301.00px;font-family:'Liberation Serif',serif;"><i>fx</i></div>
<svg class="s" style="left:341px;top:310px;" width="16" height="10" viewBox="0 0 16 10"><path d="M2 2 L8 8 L14 2" fill="none" stroke="#ccc" stroke-width="2"/></svg>
<div class="r" style="left:363px;top:293px;width:2150px;height:40px;background:#fdfdfd;border-top:1.2px solid #d4d4d4;border-bottom:1.2px solid #d4d4d4;box-sizing:border-box;"></div>
<div class="r" style="left:360.5px;top:296px;width:1.6px;height:33px;background:#acacac;"></div>
<div class="t" style="top:301.52px;font-size:24px;font-weight:normal;color:#111;left:377.00px;">USD</div>
<div class="r" style="left:2512px;top:294px;width:47px;height:39px;background:#fff;border:1px solid #d8d8d8;border-radius:6px;box-sizing:border-box;"></div>
<svg class="s" style="left:2527px;top:306px;" width="18" height="14" viewBox="0 0 18 14"><path d="M1 1 H17 L9 13Z" fill="#666"/></svg>
<div class="r" style="left:0px;top:337.5px;width:2560px;height:1.8px;background:#a8a8a8;"></div>
<div class="r" style="left:0px;top:339.3px;width:2560px;height:3px;background:#f2f2f2;"></div>
<div class="r" style="left:0px;top:342.3px;width:2560px;height:1.8px;background:#ababab;"></div>
<div class="r" style="left:36px;top:379px;width:2494px;height:1083px;background:#ccccff;"></div>
<div class="r" style="left:902px;top:539px;width:120px;height:923px;background:#fff;"></div>
<div class="r" style="left:1052px;top:539px;width:1478px;height:923px;background:#fff;"></div>
<div class="r" style="left:902px;top:1162.2px;width:1628px;height:25.6px;background:#ccccff;"></div>
<div class="r" style="left:902px;top:562.2px;width:1628px;height:25.6px;background:#ccccff;"></div>
<div class="r" style="left:902px;top:898.2px;width:1628px;height:25.6px;background:#ccccff;"></div>
<div class="r" style="left:902px;top:754.2px;width:1628px;height:25.6px;background:#ccccff;"></div>
<div class="r" style="left:0px;top:344px;width:2530px;height:35px;background:linear-gradient(#fbfbfb,#f4f4f4);"></div>
<div class="r" style="left:403px;top:344px;width:486px;height:35px;background:#f2f2f2;"></div>
<svg class="s" style="left:8px;top:352px;" width="23" height="23" viewBox="0 0 23 23"><path d="M22 0 V22 H0 Z" fill="#dcdcdc"/></svg>
<div class="r" style="left:386.5px;top:344px;width:1px;height:35px;background:#dadada;"></div>
<div class="r" style="left:402.5px;top:344px;width:1px;height:35px;background:#dadada;"></div>
<div class="r" style="left:888.5px;top:344px;width:1px;height:35px;background:#dadada;"></div>
<div class="r" style="left:900.5px;top:344px;width:1px;height:35px;background:#dadada;"></div>
<div class="r" style="left:1022.5px;top:344px;width:1px;height:35px;background:#dadada;"></div>
<div class="r" style="left:1050.5px;top:344px;width:1px;height:35px;background:#dadada;"></div>
<div class="r" style="left:1172.5px;top:344px;width:1px;height:35px;background:#dadada;"></div>
<div class="r" style="left:1294.5px;top:344px;width:1px;height:35px;background:#dadada;"></div>
<div class="r" style="left:1416.5px;top:344px;width:1px;height:35px;background:#dadada;"></div>
<div class="r" style="left:1538.5px;top:344px;width:1px;height:35px;background:#dadada;"></div>
<div class="r" style="left:1660.5px;top:344px;width:1px;height:35px;background:#dadada;"></div>
<div class="r" style="left:1782.5px;top:344px;width:1px;height:35px;background:#dadada;"></div>
<div class="r" style="left:1904.5px;top:344px;width:1px;height:35px;background:#dadada;"></div>
<div class="r" style="left:2026.5px;top:344px;width:1px;height:35px;background:#dadada;"></div>
<div class="r" style="left:2148.5px;top:344px;width:1px;height:35px;background:#dadada;"></div>
<div class="r" style="left:2270.5px;top:344px;width:1px;height:35px;background:#dadada;"></div>
<div class="r" style="left:2392.5px;top:344px;width:1px;height:35px;background:#dadada;"></div>
<div class="r" style="left:2514.5px;top:344px;width:1px;height:35px;background:#dadada;"></div>
<div class="r" style="left:2530px;top:344px;width:1px;height:35px;background:#dadada;"></div>
<div class="r" style="left:0px;top:378px;width:2530px;height:2px;background:#b4b4b4;"></div>
<div class="r" style="left:403px;top:376px;width:486px;height:4px;background:#217346;"></div>
<div class="t" style="top:352.06px;font-size:16.5px;font-weight:normal;color:#555;left:182.20px;width:60px;text-align:center;">A</div>
<div class="t" style="top:352.06px;font-size:16.5px;font-weight:normal;color:#555;left:366.20px;width:60px;text-align:center;">B</div>
<div class="t" style="top:352.06px;font-size:16.5px;font-weight:normal;color:#217346;left:617.20px;width:60px;text-align:center;">C</div>
<div class="t" style="top:352.06px;font-size:16.5px;font-weight:normal;color:#555;left:866.20px;width:60px;text-align:center;">D</div>
<div class="t" style="top:352.06px;font-size:16.5px;font-weight:normal;color:#555;left:933.20px;width:60px;text-align:center;">E</div>
<div class="t" style="top:352.06px;font-size:16.5px;font-weight:normal;color:#555;left:1000.20px;width:60px;text-align:center;">F</div>
<div class="t" style="top:352.06px;font-size:16.5px;font-weight:normal;color:#555;left:1014.20px;width:60px;text-align:center;">G</div>
<div class="t" style="top:352.06px;font-size:16.5px;font-weight:normal;color:#555;left:1083.20px;width:60px;text-align:center;">H</div>
<div class="t" style="top:352.06px;font-size:16.5px;font-weight:normal;color:#555;left:1205.20px;width:60px;text-align:center;">I</div>
<div class="t" style="top:352.06px;font-size:16.5px;font-weight:normal;color:#555;left:1327.20px;width:60px;text-align:center;">J</div>
<div class="t" style="top:352.06px;font-size:16.5px;font-weight:normal;color:#555;left:1449.20px;width:60px;text-align:center;">K</div>
<div class="t" style="top:352.06px;font-size:16.5px;font-weight:normal;color:#555;left:1571.20px;width:60px;text-align:center;">L</div>
<div class="t" style="top:352.06px;font-size:16.5px;font-weight:normal;color:#555;left:1693.20px;width:60px;text-align:center;">M</div>
<div class="t" style="top:352.06px;font-size:16.5px;font-weight:normal;color:#555;left:1815.20px;width:60px;text-align:center;">N</div>
<div class="t" style="top:352.06px;font-size:16.5px;font-weight:normal;color:#555;left:1937.20px;width:60px;text-align:center;">O</div>
<div class="t" style="top:352.06px;font-size:16.5px;font-weight:normal;color:#555;left:2059.20px;width:60px;text-align:center;">P</div>
<div class="t" style="top:352.06px;font-size:16.5px;font-weight:normal;color:#555;left:2181.20px;width:60px;text-align:center;">Q</div>
<div class="t" style="top:352.06px;font-size:16.5px;font-weight:normal;color:#555;left:2303.20px;width:60px;text-align:center;">R</div>
<div class="t" style="top:352.06px;font-size:16.5px;font-weight:normal;color:#555;left:2425.20px;width:60px;text-align:center;">S</div>
<div class="r" style="left:0px;top:379px;width:34px;height:1083px;background:linear-gradient(90deg,#f6f6f6,#fbfbfb);"></div>
<div class="r" style="left:0px;top:443px;width:34px;height:32px;background:#f2f2f2;"></div>
<div class="r" style="left:0px;top:410px;width:34px;height:1px;background:#e3e3e3;"></div>
<div class="r" style="left:0px;top:442px;width:34px;height:1px;background:#e3e3e3;"></div>
<div class="r" style="left:0px;top:474px;width:34px;height:1px;background:#e3e3e3;"></div>
<div class="r" style="left:0px;top:498px;width:34px;height:1px;background:#e3e3e3;"></div>
<div class="r" style="left:0px;top:538px;width:34px;height:1px;background:#e3e3e3;"></div>
<div class="r" style="left:0px;top:562px;width:34px;height:1px;background:#e3e3e3;"></div>
<div class="r" style="left:0px;top:586px;width:34px;height:1px;background:#e3e3e3;"></div>
<div class="r" style="left:0px;top:610px;width:34px;height:1px;background:#e3e3e3;"></div>
<div class="r" style="left:0px;top:634px;width:34px;height:1px;background:#e3e3e3;"></div>
<div class="r" style="left:0px;top:658px;width:34px;height:1px;background:#e3e3e3;"></div>
<div class="r" style="left:0px;top:682px;width:34px;height:1px;background:#e3e3e3;"></div>
<div class="r" style="left:0px;top:706px;width:34px;height:1px;background:#e3e3e3;"></div>
<div class="r" style="left:0px;top:730px;width:34px;height:1px;background:#e3e3e3;"></div>
<div class="r" style="left:0px;top:754px;width:34px;height:1px;background:#e3e3e3;"></div>
<div class="r" style="left:0px;top:778px;width:34px;height:1px;background:#e3e3e3;"></div>
<div class="r" style="left:0px;top:802px;width:34px;height:1px;background:#e3e3e3;"></div>
<div class="r" style="left:0px;top:826px;width:34px;height:1px;background:#e3e3e3;"></div>
<div class="r" style="left:0px;top:850px;width:34px;height:1px;background:#e3e3e3;"></div>
<div class="r" style="left:0px;top:874px;width:34px;height:1px;background:#e3e3e3;"></div>
<div class="r" style="left:0px;top:898px;width:34px;height:1px;background:#e3e3e3;"></div>
<div class="r" style="left:0px;top:922px;width:34px;height:1px;background:#e3e3e3;"></div>
<div class="r" style="left:0px;top:946px;width:34px;height:1px;background:#e3e3e3;"></div>
<div class="r" style="left:0px;top:970px;width:34px;height:1px;background:#e3e3e3;"></div>
<div class="r" style="left:0px;top:994px;width:34px;height:1px;background:#e3e3e3;"></div>
<div class="r" style="left:0px;top:1018px;width:34px;height:1px;background:#e3e3e3;"></div>
<div class="r" style="left:0px;top:1042px;width:34px;height:1px;background:#e3e3e3;"></div>
<div class="r" style="left:0px;top:1066px;width:34px;height:1px;background:#e3e3e3;"></div>
<div class="r" style="left:0px;top:1090px;width:34px;height:1px;background:#e3e3e3;"></div>
<div class="r" style="left:0px;top:1114px;width:34px;height:1px;background:#e3e3e3;"></div>
<div class="r" style="left:0px;top:1138px;width:34px;height:1px;background:#e3e3e3;"></div>
<div class="r" style="left:0px;top:1162px;width:34px;height:1px;background:#e3e3e3;"></div>
<div class="r" style="left:0px;top:1186px;width:34px;height:1px;background:#e3e3e3;"></div>
<div class="r" style="left:0px;top:1210px;width:34px;height:1px;background:#e3e3e3;"></div>
<div class="r" style="left:0px;top:1234px;width:34px;height:1px;background:#e3e3e3;"></div>
<div class="r" style="left:0px;top:1258px;width:34px;height:1px;background:#e3e3e3;"></div>
<div class="r" style="left:0px;top:1282px;width:34px;height:1px;background:#e3e3e3;"></div>
<div class="r" style="left:0px;top:1306px;width:34px;height:1px;background:#e3e3e3;"></div>
<div class="r" style="left:0px;top:1330px;width:34px;height:1px;background:#e3e3e3;"></div>
<div class="r" style="left:0px;top:1354px;width:34px;height:1px;background:#e3e3e3;"></div>
<div class="r" style="left:0px;top:1378px;width:34px;height:1px;background:#e3e3e3;"></div>
<div class="r" style="left:0px;top:1402px;width:34px;height:1px;background:#e3e3e3;"></div>
<div class="r" style="left:0px;top:1426px;width:34px;height:1px;background:#e3e3e3;"></div>
<div class="r" style="left:0px;top:1450px;width:34px;height:1px;background:#e3e3e3;"></div>
<div class="r" style="left:0px;top:1474px;width:34px;height:1px;background:#e3e3e3;"></div>
<div class="r" style="left:34px;top:344px;width:2px;height:1118px;background:#b8b8b8;"></div>
<div class="r" style="left:32px;top:442px;width:4px;height:34px;background:#217346;"></div>
<div class="t" style="top:394.13px;font-size:17px;font-weight:normal;color:#555;letter-spacing:-0.4px;left:1.00px;width:34px;text-align:center;">1</div>
<div class="t" style="top:426.13px;font-size:17px;font-weight:normal;color:#555;letter-spacing:-0.4px;left:1.00px;width:34px;text-align:center;">2</div>
<div class="t" style="top:458.13px;font-size:17px;font-weight:normal;color:#217346;letter-spacing:-0.4px;left:1.00px;width:34px;text-align:center;">3</div>
<div class="t" style="top:482.13px;font-size:17px;font-weight:normal;color:#555;letter-spacing:-0.4px;left:1.00px;width:34px;text-align:center;">4</div>
<div class="t" style="top:522.13px;font-size:17px;font-weight:normal;color:#555;letter-spacing:-0.4px;left:1.00px;width:34px;text-align:center;">5</div>
<div class="t" style="top:546.13px;font-size:17px;font-weight:normal;color:#555;letter-spacing:-0.4px;left:1.00px;width:34px;text-align:center;">6</div>
<div class="t" style="top:570.13px;font-size:17px;font-weight:normal;color:#555;letter-spacing:-0.4px;left:1.00px;width:34px;text-align:center;">7</div>
<div class="t" style="top:594.13px;font-size:17px;font-weight:normal;color:#555;letter-spacing:-0.4px;left:1.00px;width:34px;text-align:center;">8</div>
<div class="t" style="top:618.13px;font-size:17px;font-weight:normal;color:#555;letter-spacing:-0.4px;left:1.00px;width:34px;text-align:center;">9</div>
<div class="t" style="top:642.13px;font-size:17px;font-weight:normal;color:#555;letter-spacing:-0.4px;left:1.00px;width:34px;text-align:center;">10</div>
<div class="t" style="top:666.13px;font-size:17px;font-weight:normal;color:#555;letter-spacing:-0.4px;left:1.00px;width:34px;text-align:center;">11</div>
<div class="t" style="top:690.13px;font-size:17px;font-weight:normal;color:#555;letter-spacing:-0.4px;left:1.00px;width:34px;text-align:center;">12</div>
<div class="t" style="top:714.13px;font-size:17px;font-weight:normal;color:#555;letter-spacing:-0.4px;left:1.00px;width:34px;text-align:center;">13</div>
<div class="t" style="top:738.13px;font-size:17px;font-weight:normal;color:#555;letter-spacing:-0.4px;left:1.00px;width:34px;text-align:center;">14</div>
<div class="t" style="top:762.13px;font-size:17px;font-weight:normal;color:#555;letter-spacing:-0.4px;left:1.00px;width:34px;text-align:center;">15</div>
<div class="t" style="top:786.13px;font-size:17px;font-weight:normal;color:#555;letter-spacing:-0.4px;left:1.00px;width:34px;text-align:center;">16</div>
<div class="t" style="top:810.13px;font-size:17px;font-weight:normal;color:#555;letter-spacing:-0.4px;left:1.00px;width:34px;text-align:center;">17</div>
<div class="t" style="top:834.13px;font-size:17px;font-weight:normal;color:#555;letter-spacing:-0.4px;left:1.00px;width:34px;text-align:center;">18</div>
<div class="t" style="top:858.13px;font-size:17px;font-weight:normal;color:#555;letter-spacing:-0.4px;left:1.00px;width:34px;text-align:center;">19</div>
<div class="t" style="top:882.13px;font-size:17px;font-weight:normal;color:#555;letter-spacing:-0.4px;left:1.00px;width:34px;text-align:center;">20</div>
<div class="t" style="top:906.13px;font-size:17px;font-weight:normal;color:#555;letter-spacing:-0.4px;left:1.00px;width:34px;text-align:center;">21</div>
<div class="t" style="top:930.13px;font-size:17px;font-weight:normal;color:#555;letter-spacing:-0.4px;left:1.00px;width:34px;text-align:center;">22</div>
<div class="t" style="top:954.13px;font-size:17px;font-weight:normal;color:#555;letter-spacing:-0.4px;left:1.00px;width:34px;text-align:center;">23</div>
<div class="t" style="top:978.13px;font-size:17px;font-weight:normal;color:#555;letter-spacing:-0.4px;left:1.00px;width:34px;text-align:center;">24</div>
<div class="t" style="top:1002.13px;font-size:17px;font-weight:normal;color:#555;letter-spacing:-0.4px;left:1.00px;width:34px;text-align:center;">25</div>
<div class="t" style="top:1026.13px;font-size:17px;font-weight:normal;color:#555;letter-spacing:-0.4px;left:1.00px;width:34px;text-align:center;">26</div>
<div class="t" style="top:1050.13px;font-size:17px;font-weight:normal;color:#555;letter-spacing:-0.4px;left:1.00px;width:34px;text-align:center;">27</div>
<div class="t" style="top:1074.13px;font-size:17px;font-weight:normal;color:#555;letter-spacing:-0.4px;left:1.00px;width:34px;text-align:center;">28</div>
<div class="t" style="top:1098.13px;font-size:17px;font-weight:normal;color:#555;letter-spacing:-0.4px;left:1.00px;width:34px;text-align:center;">29</div>
<div class="t" style="top:1122.13px;font-size:17px;font-weight:normal;color:#555;letter-spacing:-0.4px;left:1.00px;width:34px;text-align:center;">30</div>
<div class="t" style="top:1146.13px;font-size:17px;font-weight:normal;color:#555;letter-spacing:-0.4px;left:1.00px;width:34px;text-align:center;">31</div>
<div class="t" style="top:1170.13px;font-size:17px;font-weight:normal;color:#555;letter-spacing:-0.4px;left:1.00px;width:34px;text-align:center;">32</div>
<div class="t" style="top:1194.13px;font-size:17px;font-weight:normal;color:#555;letter-spacing:-0.4px;left:1.00px;width:34px;text-align:center;">33</div>
<div class="t" style="top:1218.13px;font-size:17px;font-weight:normal;color:#555;letter-spacing:-0.4px;left:1.00px;width:34px;text-align:center;">34</div>
<div class="t" style="top:1242.13px;font-size:17px;font-weight:normal;color:#555;letter-spacing:-0.4px;left:1.00px;width:34px;text-align:center;">35</div>
<div class="t" style="top:1266.13px;font-size:17px;font-weight:normal;color:#555;letter-spacing:-0.4px;left:1.00px;width:34px;text-align:center;">36</div>
<div class="t" style="top:1290.13px;font-size:17px;font-weight:normal;color:#555;letter-spacing:-0.4px;left:1.00px;width:34px;text-align:center;">37</div>
<div class="t" style="top:1314.13px;font-size:17px;font-weight:normal;color:#555;letter-spacing:-0.4px;left:1.00px;width:34px;text-align:center;">38</div>
<div class="t" style="top:1338.13px;font-size:17px;font-weight:normal;color:#555;letter-spacing:-0.4px;left:1.00px;width:34px;text-align:center;">39</div>
<div class="t" style="top:1362.13px;font-size:17px;font-weight:normal;color:#555;letter-spacing:-0.4px;left:1.00px;width:34px;text-align:center;">40</div>
<div class="t" style="top:1386.13px;font-size:17px;font-weight:normal;color:#555;letter-spacing:-0.4px;left:1.00px;width:34px;text-align:center;">41</div>
<div class="t" style="top:1410.13px;font-size:17px;font-weight:normal;color:#555;letter-spacing:-0.4px;left:1.00px;width:34px;text-align:center;">42</div>
<div class="t" style="top:1434.13px;font-size:17px;font-weight:normal;color:#555;letter-spacing:-0.4px;left:1.00px;width:34px;text-align:center;">43</div>
<div class="t" style="top:1458.13px;font-size:17px;font-weight:normal;color:#555;letter-spacing:-0.4px;left:1.00px;width:34px;text-align:center;">44</div>
<div class="t" style="top:387.08px;font-size:16px;font-weight:bold;color:#000;left:420.00px;">0</div>
<div class="t" style="top:419.08px;font-size:16px;font-weight:bold;color:#000;letter-spacing:-0.1px;left:420.00px;">EXPENSES - MONTHLY</div>
<div class="t" style="top:451.08px;font-size:16px;font-weight:bold;color:#000;letter-spacing:-0.4px;left:420.00px;">USD</div>
<div class="t" style="top:511.08px;font-size:16px;font-weight:bold;color:#000;letter-spacing:-0.2px;left:420.00px;">DESCRIPTION</div>
<div class="t" style="top:511.08px;font-size:16px;font-weight:bold;color:#000;letter-spacing:-0.3px;left:903.50px;width:120px;text-align:center;">8-Dec</div>
<div class="t" style="top:511.08px;font-size:16px;font-weight:bold;color:#000;letter-spacing:-0.1px;left:1053.00px;width:120px;text-align:center;">JANUARY</div>
<div class="t" style="top:511.08px;font-size:16px;font-weight:bold;color:#000;letter-spacing:-0.1px;left:1175.00px;width:120px;text-align:center;">FEBRUARY</div>
<div class="t" style="top:512.58px;font-size:16px;font-weight:bold;color:#000;letter-spacing:-0.1px;left:1297.00px;width:120px;text-align:center;">MARCH</div>
<div class="t" style="top:511.08px;font-size:16px;font-weight:bold;color:#000;letter-spacing:-0.1px;left:1419.00px;width:120px;text-align:center;">APRIL</div>
<div class="t" style="top:511.08px;font-size:16px;font-weight:bold;color:#000;letter-spacing:-0.1px;left:1541.00px;width:120px;text-align:center;">MAY</div>
<div class="t" style="top:511.08px;font-size:16px;font-weight:bold;color:#000;letter-spacing:-0.1px;left:1663.00px;width:120px;text-align:center;">JUNE</div>
<div class="t" style="top:511.08px;font-size:16px;font-weight:bold;color:#000;letter-spacing:-0.1px;left:1785.00px;width:120px;text-align:center;">JULY</div>
<div class="t" style="top:511.08px;font-size:16px;font-weight:bold;color:#000;letter-spacing:-0.1px;left:1907.00px;width:120px;text-align:center;">AUGUST</div>
<div class="t" style="top:511.08px;font-size:16px;font-weight:bold;color:#000;letter-spacing:-0.1px;left:2029.00px;width:120px;text-align:center;">SEPTEMBER</div>
<div class="t" style="top:511.08px;font-size:16px;font-weight:bold;color:#000;letter-spacing:-0.1px;left:2151.00px;width:120px;text-align:center;">OCTOBER</div>
<div class="t" style="top:511.08px;font-size:16px;font-weight:bold;color:#000;letter-spacing:-0.1px;left:2273.00px;width:120px;text-align:center;">NOVEMBER</div>
<div class="t" style="top:511.08px;font-size:16px;font-weight:bold;color:#000;letter-spacing:-0.1px;left:2395.00px;width:120px;text-align:center;">DECEMBER</div>
<div class="t" style="top:387.08px;font-size:16px;font-weight:bold;color:#fff;letter-spacing:-0.85px;left:1054.50px;">-7,817</div>
<div class="t" style="top:387.08px;font-size:16px;font-weight:bold;color:#fff;letter-spacing:-0.85px;left:1176.50px;">812</div>
<div class="t" style="top:387.08px;font-size:16px;font-weight:bold;color:#fff;letter-spacing:-0.85px;left:1298.50px;">0</div>
<div class="t" style="top:387.08px;font-size:16px;font-weight:bold;color:#fff;letter-spacing:-0.85px;left:1420.50px;">0</div>
<div class="t" style="top:387.08px;font-size:16px;font-weight:bold;color:#fff;letter-spacing:-0.85px;left:1542.50px;">0</div>
<div class="t" style="top:387.08px;font-size:16px;font-weight:bold;color:#fff;letter-spacing:-0.85px;left:1664.50px;">0</div>
<div class="t" style="top:387.08px;font-size:16px;font-weight:bold;color:#fff;letter-spacing:-0.85px;left:1786.50px;">0</div>
<div class="t" style="top:387.08px;font-size:16px;font-weight:bold;color:#fff;letter-spacing:-0.85px;left:1908.50px;">0</div>
<div class="t" style="top:419.08px;font-size:16px;font-weight:bold;color:#fff;letter-spacing:-0.9px;left:1052.50px;width:120px;text-align:center;">15,522</div>
<div class="t" style="top:419.08px;font-size:16px;font-weight:bold;color:#fff;letter-spacing:-0.9px;left:1174.50px;width:120px;text-align:center;">26,386</div>
<div class="t" style="top:419.08px;font-size:16px;font-weight:bold;color:#fff;letter-spacing:-0.9px;left:1296.50px;width:120px;text-align:center;">0</div>
<div class="t" style="top:419.08px;font-size:16px;font-weight:bold;color:#fff;letter-spacing:-0.9px;left:1418.50px;width:120px;text-align:center;">0</div>
<div class="t" style="top:419.08px;font-size:16px;font-weight:bold;color:#fff;letter-spacing:-0.9px;left:1540.50px;width:120px;text-align:center;">0</div>
<div class="t" style="top:419.08px;font-size:16px;font-weight:bold;color:#fff;letter-spacing:-0.9px;left:1662.50px;width:120px;text-align:center;">0</div>
<div class="t" style="top:419.08px;font-size:16px;font-weight:bold;color:#fff;letter-spacing:-0.9px;left:1784.50px;width:120px;text-align:center;">0</div>
<div class="t" style="top:419.08px;font-size:16px;font-weight:bold;color:#fff;letter-spacing:-0.9px;left:1906.50px;width:120px;text-align:center;">0</div>
<div class="t" style="top:419.08px;font-size:16px;font-weight:bold;color:#fff;letter-spacing:-0.9px;left:2028.50px;width:120px;text-align:center;">0</div>
<div class="t" style="top:419.08px;font-size:16px;font-weight:bold;color:#fff;letter-spacing:-0.9px;left:2150.50px;width:120px;text-align:center;">0</div>
<div class="t" style="top:451.08px;font-size:16px;font-weight:bold;color:#fff;letter-spacing:-0.9px;right:1395.50px;">233,388</div>
<div class="t" style="top:451.08px;font-size:16px;font-weight:bold;color:#fff;letter-spacing:-0.9px;right:1273.50px;">255,735</div>
<div class="t" style="top:451.08px;font-size:16px;font-weight:bold;color:#fff;letter-spacing:-0.9px;right:1151.50px;">-</div>
<div class="t" style="top:451.08px;font-size:16px;font-weight:bold;color:#fff;letter-spacing:-0.9px;right:1029.50px;">-</div>
<div class="t" style="top:451.08px;font-size:16px;font-weight:bold;color:#fff;letter-spacing:-0.9px;right:907.50px;">-</div>
<div class="t" style="top:451.08px;font-size:16px;font-weight:bold;color:#fff;letter-spacing:-0.9px;right:785.50px;">-</div>
<div class="t" style="top:451.08px;font-size:16px;font-weight:bold;color:#fff;letter-spacing:-0.9px;right:663.50px;">-</div>
<div class="t" style="top:451.08px;font-size:16px;font-weight:bold;color:#fff;letter-spacing:-0.9px;right:541.50px;">-</div>
<div class="t" style="top:451.08px;font-size:16px;font-weight:bold;color:#fff;letter-spacing:-0.9px;right:419.50px;">-</div>
<div class="t" style="top:451.08px;font-size:16px;font-weight:bold;color:#fff;letter-spacing:-0.9px;right:297.50px;">-</div>
<div class="t" style="top:451.08px;font-size:16px;font-weight:bold;color:#fff;letter-spacing:-0.9px;right:175.50px;">-</div>
<div class="t" style="top:479.08px;font-size:16px;font-weight:bold;color:#fff;letter-spacing:-0.85px;left:1054.00px;">23,339</div>
<div class="t" style="top:479.08px;font-size:16px;font-weight:bold;color:#fff;letter-spacing:-0.85px;left:1176.00px;">25,574</div>
<div class="t" style="top:479.08px;font-size:16px;font-weight:bold;color:#fff;letter-spacing:-0.85px;left:1298.00px;">0</div>
<div class="t" style="top:479.08px;font-size:16px;font-weight:bold;color:#fff;letter-spacing:-0.85px;left:1420.00px;">0</div>
<div class="t" style="top:479.08px;font-size:16px;font-weight:bold;color:#fff;letter-spacing:-0.85px;left:1542.00px;">0</div>
<div class="t" style="top:479.08px;font-size:16px;font-weight:bold;color:#fff;letter-spacing:-0.85px;left:1664.00px;">0</div>
<div class="t" style="top:479.08px;font-size:16px;font-weight:bold;color:#fff;letter-spacing:-0.85px;left:1786.00px;">0</div>
<div class="t" style="top:479.08px;font-size:16px;font-weight:bold;color:#fff;letter-spacing:-0.85px;left:1908.00px;">0</div>
<div class="t" style="top:479.08px;font-size:16px;font-weight:bold;color:#fff;letter-spacing:-0.85px;left:2030.00px;">0</div>
<div class="t" style="top:479.08px;font-size:16px;font-weight:bold;color:#fff;letter-spacing:-0.85px;left:2152.00px;">0</div>
<div class="t" style="top:479.08px;font-size:16px;font-weight:bold;color:#fff;letter-spacing:-0.85px;left:2274.00px;">0</div>
<div class="t" style="top:543.48px;font-size:16px;font-weight:normal;color:#000;letter-spacing:-0.45px;right:1391.50px;">(853,345)</div>
<div class="t" style="top:567.48px;font-size:16px;font-weight:bold;color:#000;letter-spacing:-0.2px;left:420.00px;">COST OF SALE</div>
<div class="t" style="top:567.48px;font-size:16px;font-weight:bold;color:#000;letter-spacing:-0.9px;right:1543.00px;">362,915</div>
<div class="t" style="top:567.48px;font-size:16px;font-weight:bold;color:#000;letter-spacing:-0.9px;right:1394.00px;">357,711</div>
<div class="t" style="top:567.48px;font-size:16px;font-weight:bold;color:#000;letter-spacing:-0.9px;right:1272.00px;">285,140</div>
<div class="t" style="top:567.48px;font-size:16px;font-weight:bold;color:#000;right:1148.80px;">0</div>
<div class="t" style="top:567.48px;font-size:16px;font-weight:bold;color:#000;right:1026.80px;">0</div>
<div class="t" style="top:567.48px;font-size:16px;font-weight:bold;color:#000;right:904.80px;">0</div>
<div class="t" style="top:567.48px;font-size:16px;font-weight:bold;color:#000;right:782.80px;">0</div>
<div class="t" style="top:567.48px;font-size:16px;font-weight:bold;color:#000;right:660.80px;">0</div>
<div class="t" style="top:567.48px;font-size:16px;font-weight:bold;color:#000;right:538.80px;">0</div>
<div class="t" style="top:567.48px;font-size:16px;font-weight:bold;color:#000;right:416.80px;">0</div>
<div class="t" style="top:567.48px;font-size:16px;font-weight:bold;color:#000;right:294.80px;">0</div>
<div class="t" style="top:567.48px;font-size:16px;font-weight:bold;color:#000;right:172.80px;">0</div>
<div class="t" style="top:567.48px;font-size:16px;font-weight:bold;color:#000;right:50.80px;">0</div>
<div class="t" style="top:591.48px;font-size:16px;font-weight:normal;color:#000;letter-spacing:-0.1px;left:433.50px;">INTERCONNECT COST</div>
<div class="t" style="top:591.48px;font-size:16px;font-weight:normal;color:#000;letter-spacing:-0.9px;right:1543.00px;">127,628</div>
<div class="t" style="top:591.48px;font-size:16px;font-weight:normal;color:#000;letter-spacing:-0.9px;right:1394.00px;">101,248</div>
<div class="t" style="top:591.48px;font-size:16px;font-weight:normal;color:#000;letter-spacing:-0.9px;right:1272.00px;">53,652</div>
<div class="t" style="top:591.48px;font-size:16px;font-weight:normal;color:#000;right:1148.80px;">0</div>
<div class="t" style="top:591.48px;font-size:16px;font-weight:normal;color:#000;right:1026.80px;">0</div>
<div class="t" style="top:591.48px;font-size:16px;font-weight:normal;color:#000;right:904.80px;">0</div>
<div class="t" style="top:591.48px;font-size:16px;font-weight:normal;color:#000;right:782.80px;">0</div>
<div class="t" style="top:591.48px;font-size:16px;font-weight:normal;color:#000;right:660.80px;">0</div>
<div class="t" style="top:591.48px;font-size:16px;font-weight:normal;color:#000;right:538.80px;">0</div>
<div class="t" style="top:591.48px;font-size:16px;font-weight:normal;color:#000;right:416.80px;">0</div>
<div class="t" style="top:591.48px;font-size:16px;font-weight:normal;color:#000;right:294.80px;">0</div>
<div class="t" style="top:591.48px;font-size:16px;font-weight:normal;color:#000;right:172.80px;">0</div>
<div class="t" style="top:591.48px;font-size:16px;font-weight:normal;color:#000;right:50.80px;">0</div>
<div class="t" style="top:615.48px;font-size:16px;font-weight:normal;color:#000;letter-spacing:-0.1px;left:433.50px;">ROAMING COST</div>
<div class="t" style="top:615.48px;font-size:16px;font-weight:normal;color:#000;letter-spacing:-0.9px;right:1543.00px;">28,606</div>
<div class="t" style="top:615.48px;font-size:16px;font-weight:normal;color:#000;letter-spacing:-0.9px;right:1394.00px;">28,163</div>
<div class="t" style="top:615.48px;font-size:16px;font-weight:normal;color:#000;letter-spacing:-0.9px;right:1272.00px;">23,489</div>
<div class="t" style="top:615.48px;font-size:16px;font-weight:normal;color:#000;right:1148.80px;">0</div>
<div class="t" style="top:615.48px;font-size:16px;font-weight:normal;color:#000;right:1026.80px;">0</div>
<div class="t" style="top:615.48px;font-size:16px;font-weight:normal;color:#000;right:904.80px;">0</div>
<div class="t" style="top:615.48px;font-size:16px;font-weight:normal;color:#000;right:782.80px;">0</div>
<div class="t" style="top:615.48px;font-size:16px;font-weight:normal;color:#000;right:660.80px;">0</div>
<div class="t" style="top:615.48px;font-size:16px;font-weight:normal;color:#000;right:538.80px;">0</div>
<div class="t" style="top:615.48px;font-size:16px;font-weight:normal;color:#000;right:416.80px;">0</div>
<div class="t" style="top:615.48px;font-size:16px;font-weight:normal;color:#000;right:294.80px;">0</div>
<div class="t" style="top:615.48px;font-size:16px;font-weight:normal;color:#000;right:172.80px;">0</div>
<div class="t" style="top:615.48px;font-size:16px;font-weight:normal;color:#000;right:50.80px;">0</div>
<div class="t" style="top:639.48px;font-size:16px;font-weight:normal;color:#000;letter-spacing:-0.1px;left:433.50px;">INTERNATIONAL CALLS &amp; iPTT TERMINATION</div>
<div class="t" style="top:639.48px;font-size:16px;font-weight:normal;color:#000;letter-spacing:-0.9px;right:1543.00px;">0</div>
<div class="t" style="top:639.48px;font-size:16px;font-weight:normal;color:#000;letter-spacing:-0.9px;right:1394.00px;">0</div>
<div class="t" style="top:639.48px;font-size:16px;font-weight:normal;color:#000;letter-spacing:-0.9px;right:1272.00px;">0</div>
<div class="t" style="top:639.48px;font-size:16px;font-weight:normal;color:#000;right:1148.80px;">0</div>
<div class="t" style="top:639.48px;font-size:16px;font-weight:normal;color:#000;right:1026.80px;">0</div>
<div class="t" style="top:639.48px;font-size:16px;font-weight:normal;color:#000;right:904.80px;">0</div>
<div class="t" style="top:639.48px;font-size:16px;font-weight:normal;color:#000;right:782.80px;">0</div>
<div class="t" style="top:639.48px;font-size:16px;font-weight:normal;color:#000;right:660.80px;">0</div>
<div class="t" style="top:639.48px;font-size:16px;font-weight:normal;color:#000;right:538.80px;">0</div>
<div class="t" style="top:639.48px;font-size:16px;font-weight:normal;color:#000;right:416.80px;">0</div>
<div class="t" style="top:639.48px;font-size:16px;font-weight:normal;color:#000;right:294.80px;">0</div>
<div class="t" style="top:639.48px;font-size:16px;font-weight:normal;color:#000;right:172.80px;">0</div>
<div class="t" style="top:639.48px;font-size:16px;font-weight:normal;color:#000;right:50.80px;">0</div>
<div class="t" style="top:663.48px;font-size:16px;font-weight:normal;color:#000;letter-spacing:-0.1px;left:433.50px;">VALUE ADDED SERVICES COST</div>
<div class="t" style="top:663.48px;font-size:16px;font-weight:normal;color:#000;letter-spacing:-0.9px;right:1543.00px;">4,179</div>
<div class="t" style="top:663.48px;font-size:16px;font-weight:normal;color:#000;letter-spacing:-0.9px;right:1394.00px;">4,179</div>
<div class="t" style="top:663.48px;font-size:16px;font-weight:normal;color:#000;letter-spacing:-0.9px;right:1272.00px;">4,179</div>
<div class="t" style="top:663.48px;font-size:16px;font-weight:normal;color:#000;right:1148.80px;">0</div>
<div class="t" style="top:663.48px;font-size:16px;font-weight:normal;color:#000;right:1026.80px;">0</div>
<div class="t" style="top:663.48px;font-size:16px;font-weight:normal;color:#000;right:904.80px;">0</div>
<div class="t" style="top:663.48px;font-size:16px;font-weight:normal;color:#000;right:782.80px;">0</div>
<div class="t" style="top:663.48px;font-size:16px;font-weight:normal;color:#000;right:660.80px;">0</div>
<div class="t" style="top:663.48px;font-size:16px;font-weight:normal;color:#000;right:538.80px;">0</div>
<div class="t" style="top:663.48px;font-size:16px;font-weight:normal;color:#000;right:416.80px;">0</div>
<div class="t" style="top:663.48px;font-size:16px;font-weight:normal;color:#000;right:294.80px;">0</div>
<div class="t" style="top:663.48px;font-size:16px;font-weight:normal;color:#000;right:172.80px;">0</div>
<div class="t" style="top:663.48px;font-size:16px;font-weight:normal;color:#000;right:50.80px;">0</div>
<div class="t" style="top:687.48px;font-size:16px;font-weight:normal;color:#000;letter-spacing:-0.1px;left:433.50px;">COST OF HANDSETS &amp; ACCESSORIES</div>
<div class="t" style="top:687.48px;font-size:16px;font-weight:normal;color:#000;letter-spacing:-0.9px;right:1543.00px;">20,220</div>
<div class="t" style="top:687.48px;font-size:16px;font-weight:normal;color:#000;letter-spacing:-0.9px;right:1394.00px;">35,492</div>
<div class="t" style="top:687.48px;font-size:16px;font-weight:normal;color:#000;letter-spacing:-0.9px;right:1272.00px;">8,139</div>
<div class="t" style="top:687.48px;font-size:16px;font-weight:normal;color:#000;right:1148.80px;">0</div>
<div class="t" style="top:687.48px;font-size:16px;font-weight:normal;color:#000;right:1026.80px;">0</div>
<div class="t" style="top:687.48px;font-size:16px;font-weight:normal;color:#000;right:904.80px;">0</div>
<div class="t" style="top:687.48px;font-size:16px;font-weight:normal;color:#000;right:782.80px;">0</div>
<div class="t" style="top:687.48px;font-size:16px;font-weight:normal;color:#000;right:660.80px;">0</div>
<div class="t" style="top:687.48px;font-size:16px;font-weight:normal;color:#000;right:538.80px;">0</div>
<div class="t" style="top:687.48px;font-size:16px;font-weight:normal;color:#000;right:416.80px;">0</div>
<div class="t" style="top:687.48px;font-size:16px;font-weight:normal;color:#000;right:294.80px;">0</div>
<div class="t" style="top:687.48px;font-size:16px;font-weight:normal;color:#000;right:172.80px;">0</div>
<div class="t" style="top:687.48px;font-size:16px;font-weight:normal;color:#000;right:50.80px;">0</div>
<div class="t" style="top:711.48px;font-size:16px;font-weight:normal;color:#000;letter-spacing:-0.1px;left:433.50px;">COSTS FOR MAINTAINING NETWORK</div>
<div class="t" style="top:711.48px;font-size:16px;font-weight:normal;color:#000;letter-spacing:-0.9px;right:1543.00px;">182,282</div>
<div class="t" style="top:711.48px;font-size:16px;font-weight:normal;color:#000;letter-spacing:-0.9px;right:1394.00px;">188,629</div>
<div class="t" style="top:711.48px;font-size:16px;font-weight:normal;color:#000;letter-spacing:-0.9px;right:1272.00px;">195,681</div>
<div class="t" style="top:711.48px;font-size:16px;font-weight:normal;color:#000;right:1148.80px;">0</div>
<div class="t" style="top:711.48px;font-size:16px;font-weight:normal;color:#000;right:1026.80px;">0</div>
<div class="t" style="top:711.48px;font-size:16px;font-weight:normal;color:#000;right:904.80px;">0</div>
<div class="t" style="top:711.48px;font-size:16px;font-weight:normal;color:#000;right:782.80px;">0</div>
<div class="t" style="top:711.48px;font-size:16px;font-weight:normal;color:#000;right:660.80px;">0</div>
<div class="t" style="top:711.48px;font-size:16px;font-weight:normal;color:#000;right:538.80px;">0</div>
<div class="t" style="top:711.48px;font-size:16px;font-weight:normal;color:#000;right:416.80px;">0</div>
<div class="t" style="top:711.48px;font-size:16px;font-weight:normal;color:#000;right:294.80px;">0</div>
<div class="t" style="top:711.48px;font-size:16px;font-weight:normal;color:#000;right:172.80px;">0</div>
<div class="t" style="top:711.48px;font-size:16px;font-weight:normal;color:#000;right:50.80px;">0</div>
<div class="t" style="top:759.48px;font-size:16px;font-weight:bold;color:#000;letter-spacing:-0.2px;left:420.00px;">OPERATING EXPENSES</div>
<div class="t" style="top:759.48px;font-size:16px;font-weight:bold;color:#000;letter-spacing:-0.9px;right:1543.00px;">665,068</div>
<div class="t" style="top:759.48px;font-size:16px;font-weight:bold;color:#000;letter-spacing:-0.9px;right:1394.00px;">680,844</div>
<div class="t" style="top:759.48px;font-size:16px;font-weight:bold;color:#000;letter-spacing:-0.9px;right:1272.00px;">663,603</div>
<div class="t" style="top:759.48px;font-size:16px;font-weight:bold;color:#000;right:1148.80px;">0</div>
<div class="t" style="top:759.48px;font-size:16px;font-weight:bold;color:#000;right:1026.80px;">0</div>
<div class="t" style="top:759.48px;font-size:16px;font-weight:bold;color:#000;right:904.80px;">0</div>
<div class="t" style="top:759.48px;font-size:16px;font-weight:bold;color:#000;right:782.80px;">0</div>
<div class="t" style="top:759.48px;font-size:16px;font-weight:bold;color:#000;right:660.80px;">0</div>
<div class="t" style="top:759.48px;font-size:16px;font-weight:bold;color:#000;right:538.80px;">0</div>
<div class="t" style="top:759.48px;font-size:16px;font-weight:bold;color:#000;right:416.80px;">0</div>
<div class="t" style="top:759.48px;font-size:16px;font-weight:bold;color:#000;right:294.80px;">0</div>
<div class="t" style="top:759.48px;font-size:16px;font-weight:bold;color:#000;right:172.80px;">0</div>
<div class="t" style="top:759.48px;font-size:16px;font-weight:bold;color:#000;right:50.80px;">0</div>
<div class="t" style="top:783.48px;font-size:16px;font-weight:normal;color:#000;letter-spacing:-0.1px;left:433.50px;">GENERAL &amp; ADMINISTRATIVE</div>
<div class="t" style="top:783.48px;font-size:16px;font-weight:normal;color:#000;letter-spacing:-0.9px;right:1543.00px;">258,085</div>
<div class="t" style="top:783.48px;font-size:16px;font-weight:normal;color:#000;letter-spacing:-0.9px;right:1394.00px;">271,757</div>
<div class="t" style="top:783.48px;font-size:16px;font-weight:normal;color:#000;letter-spacing:-0.9px;right:1272.00px;">231,101</div>
<div class="t" style="top:783.48px;font-size:16px;font-weight:normal;color:#000;right:1148.80px;">0</div>
<div class="t" style="top:783.48px;font-size:16px;font-weight:normal;color:#000;right:1026.80px;">0</div>
<div class="t" style="top:783.48px;font-size:16px;font-weight:normal;color:#000;right:904.80px;">0</div>
<div class="t" style="top:783.48px;font-size:16px;font-weight:normal;color:#000;right:782.80px;">0</div>
<div class="t" style="top:783.48px;font-size:16px;font-weight:normal;color:#000;right:660.80px;">0</div>
<div class="t" style="top:783.48px;font-size:16px;font-weight:normal;color:#000;right:538.80px;">0</div>
<div class="t" style="top:783.48px;font-size:16px;font-weight:normal;color:#000;right:416.80px;">0</div>
<div class="t" style="top:783.48px;font-size:16px;font-weight:normal;color:#000;right:294.80px;">0</div>
<div class="t" style="top:783.48px;font-size:16px;font-weight:normal;color:#000;right:172.80px;">0</div>
<div class="t" style="top:783.48px;font-size:16px;font-weight:normal;color:#000;right:50.80px;">0</div>
<div class="t" style="top:807.48px;font-size:16px;font-weight:normal;color:#000;letter-spacing:-0.1px;left:433.50px;">SALES &amp; MARKETING</div>
<div class="t" style="top:807.48px;font-size:16px;font-weight:normal;color:#000;letter-spacing:-0.9px;right:1543.00px;">57,525</div>
<div class="t" style="top:807.48px;font-size:16px;font-weight:normal;color:#000;letter-spacing:-0.9px;right:1394.00px;">62,084</div>
<div class="t" style="top:807.48px;font-size:16px;font-weight:normal;color:#000;letter-spacing:-0.9px;right:1272.00px;">69,679</div>
<div class="t" style="top:807.48px;font-size:16px;font-weight:normal;color:#000;right:1148.80px;">0</div>
<div class="t" style="top:807.48px;font-size:16px;font-weight:normal;color:#000;right:1026.80px;">0</div>
<div class="t" style="top:807.48px;font-size:16px;font-weight:normal;color:#000;right:904.80px;">0</div>
<div class="t" style="top:807.48px;font-size:16px;font-weight:normal;color:#000;right:782.80px;">0</div>
<div class="t" style="top:807.48px;font-size:16px;font-weight:normal;color:#000;right:660.80px;">0</div>
<div class="t" style="top:807.48px;font-size:16px;font-weight:normal;color:#000;right:538.80px;">0</div>
<div class="t" style="top:807.48px;font-size:16px;font-weight:normal;color:#000;right:416.80px;">0</div>
<div class="t" style="top:807.48px;font-size:16px;font-weight:normal;color:#000;right:294.80px;">0</div>
<div class="t" style="top:807.48px;font-size:16px;font-weight:normal;color:#000;right:172.80px;">0</div>
<div class="t" style="top:807.48px;font-size:16px;font-weight:normal;color:#000;right:50.80px;">0</div>
<div class="t" style="top:831.48px;font-size:16px;font-weight:normal;color:#000;letter-spacing:-0.1px;left:433.50px;">TECHNICAL</div>
<div class="t" style="top:831.48px;font-size:16px;font-weight:normal;color:#000;letter-spacing:-0.9px;right:1543.00px;">349,459</div>
<div class="t" style="top:831.48px;font-size:16px;font-weight:normal;color:#000;letter-spacing:-0.9px;right:1394.00px;">347,004</div>
<div class="t" style="top:831.48px;font-size:16px;font-weight:normal;color:#000;letter-spacing:-0.9px;right:1272.00px;">362,824</div>
<div class="t" style="top:831.48px;font-size:16px;font-weight:normal;color:#000;right:1148.80px;">0</div>
<div class="t" style="top:831.48px;font-size:16px;font-weight:normal;color:#000;right:1026.80px;">0</div>
<div class="t" style="top:831.48px;font-size:16px;font-weight:normal;color:#000;right:904.80px;">0</div>
<div class="t" style="top:831.48px;font-size:16px;font-weight:normal;color:#000;right:782.80px;">0</div>
<div class="t" style="top:831.48px;font-size:16px;font-weight:normal;color:#000;right:660.80px;">0</div>
<div class="t" style="top:831.48px;font-size:16px;font-weight:normal;color:#000;right:538.80px;">0</div>
<div class="t" style="top:831.48px;font-size:16px;font-weight:normal;color:#000;right:416.80px;">0</div>
<div class="t" style="top:831.48px;font-size:16px;font-weight:normal;color:#000;right:294.80px;">0</div>
<div class="t" style="top:831.48px;font-size:16px;font-weight:normal;color:#000;right:172.80px;">0</div>
<div class="t" style="top:831.48px;font-size:16px;font-weight:normal;color:#000;right:50.80px;">0</div>
<div class="t" style="top:855.48px;font-size:16px;font-weight:normal;color:#000;letter-spacing:-0.6px;left:52.00px;">01-0000-526115-0000-0000-0000-00</div>
<div class="t" style="top:855.48px;font-size:16px;font-weight:normal;color:#000;letter-spacing:-0.1px;left:433.50px;">REVENUE SHARING</div>
<div class="t" style="top:855.48px;font-size:16px;font-weight:normal;color:#000;letter-spacing:-0.9px;right:1543.00px;">24,456</div>
<div class="t" style="top:855.48px;font-size:16px;font-weight:normal;color:#000;letter-spacing:-0.9px;right:1394.00px;">15,522</div>
<div class="t" style="top:855.48px;font-size:16px;font-weight:normal;color:#000;letter-spacing:-0.9px;right:1272.00px;">26,386</div>
<div class="t" style="top:855.48px;font-size:16px;font-weight:normal;color:#000;right:1148.80px;">0</div>
<div class="t" style="top:855.48px;font-size:16px;font-weight:normal;color:#000;right:1026.80px;">0</div>
<div class="t" style="top:855.48px;font-size:16px;font-weight:normal;color:#000;right:904.80px;">0</div>
<div class="t" style="top:855.48px;font-size:16px;font-weight:normal;color:#000;right:782.80px;">0</div>
<div class="t" style="top:855.48px;font-size:16px;font-weight:normal;color:#000;right:660.80px;">0</div>
<div class="t" style="top:855.48px;font-size:16px;font-weight:normal;color:#000;right:538.80px;">0</div>
<div class="t" style="top:855.48px;font-size:16px;font-weight:normal;color:#000;right:416.80px;">0</div>
<div class="t" style="top:855.48px;font-size:16px;font-weight:normal;color:#000;right:294.80px;">0</div>
<div class="t" style="top:855.48px;font-size:16px;font-weight:normal;color:#000;right:172.80px;">0</div>
<div class="t" style="top:855.48px;font-size:16px;font-weight:normal;color:#000;right:50.80px;">0</div>
<div class="t" style="top:903.48px;font-size:16px;font-weight:bold;color:#000;letter-spacing:-0.2px;left:420.00px;">OPERATING EXPENSES - DETAILED</div>
<div class="t" style="top:903.48px;font-size:16px;font-weight:bold;color:#000;letter-spacing:-0.9px;right:1543.00px;">665,068</div>
<div class="t" style="top:903.48px;font-size:16px;font-weight:bold;color:#000;letter-spacing:-0.9px;right:1394.00px;">680,844</div>
<div class="t" style="top:903.48px;font-size:16px;font-weight:bold;color:#000;letter-spacing:-0.9px;right:1272.00px;">663,603</div>
<div class="t" style="top:903.48px;font-size:16px;font-weight:bold;color:#000;right:1148.80px;">0</div>
<div class="t" style="top:903.48px;font-size:16px;font-weight:bold;color:#000;right:1026.80px;">0</div>
<div class="t" style="top:903.48px;font-size:16px;font-weight:bold;color:#000;right:904.80px;">0</div>
<div class="t" style="top:903.48px;font-size:16px;font-weight:bold;color:#000;right:782.80px;">0</div>
<div class="t" style="top:903.48px;font-size:16px;font-weight:bold;color:#000;right:660.80px;">0</div>
<div class="t" style="top:903.48px;font-size:16px;font-weight:bold;color:#000;right:538.80px;">0</div>
<div class="t" style="top:903.48px;font-size:16px;font-weight:bold;color:#000;right:416.80px;">0</div>
<div class="t" style="top:903.48px;font-size:16px;font-weight:bold;color:#000;right:294.80px;">0</div>
<div class="t" style="top:903.48px;font-size:16px;font-weight:bold;color:#000;right:172.80px;">0</div>
<div class="t" style="top:903.48px;font-size:16px;font-weight:bold;color:#000;right:50.80px;">0</div>
<div class="t" style="top:927.48px;font-size:16px;font-weight:normal;color:#000;letter-spacing:-0.1px;left:420.00px;">CEO</div>
<div class="t" style="top:927.48px;font-size:16px;font-weight:normal;color:#000;letter-spacing:-0.9px;right:1543.00px;">29,987</div>
<div class="t" style="top:927.48px;font-size:16px;font-weight:normal;color:#000;letter-spacing:-0.9px;right:1394.00px;">85,104</div>
<div class="t" style="top:927.48px;font-size:16px;font-weight:normal;color:#000;letter-spacing:-0.9px;right:1272.00px;">30,294</div>
<div class="t" style="top:927.48px;font-size:16px;font-weight:normal;color:#000;right:1148.80px;">0</div>
<div class="t" style="top:927.48px;font-size:16px;font-weight:normal;color:#000;right:1026.80px;">0</div>
<div class="t" style="top:927.48px;font-size:16px;font-weight:normal;color:#000;right:904.80px;">0</div>
<div class="t" style="top:927.48px;font-size:16px;font-weight:normal;color:#000;right:782.80px;">0</div>
<div class="t" style="top:927.48px;font-size:16px;font-weight:normal;color:#000;right:660.80px;">0</div>
<div class="t" style="top:927.48px;font-size:16px;font-weight:normal;color:#000;right:538.80px;">0</div>
<div class="t" style="top:927.48px;font-size:16px;font-weight:normal;color:#000;right:416.80px;">0</div>
<div class="t" style="top:927.48px;font-size:16px;font-weight:normal;color:#000;right:294.80px;">0</div>
<div class="t" style="top:927.48px;font-size:16px;font-weight:normal;color:#000;right:172.80px;">0</div>
<div class="t" style="top:927.48px;font-size:16px;font-weight:normal;color:#000;right:50.80px;">0</div>
<div class="t" style="top:951.48px;font-size:16px;font-weight:normal;color:#000;letter-spacing:-0.1px;left:420.00px;">FINANCE</div>
<div class="t" style="top:951.48px;font-size:16px;font-weight:normal;color:#000;letter-spacing:-0.9px;right:1543.00px;">135,468</div>
<div class="t" style="top:951.48px;font-size:16px;font-weight:normal;color:#000;letter-spacing:-0.9px;right:1394.00px;">91,883</div>
<div class="t" style="top:951.48px;font-size:16px;font-weight:normal;color:#000;letter-spacing:-0.9px;right:1272.00px;">109,937</div>
<div class="t" style="top:951.48px;font-size:16px;font-weight:normal;color:#000;right:1148.80px;">0</div>
<div class="t" style="top:951.48px;font-size:16px;font-weight:normal;color:#000;right:1026.80px;">0</div>
<div class="t" style="top:951.48px;font-size:16px;font-weight:normal;color:#000;right:904.80px;">0</div>
<div class="t" style="top:951.48px;font-size:16px;font-weight:normal;color:#000;right:782.80px;">0</div>
<div class="t" style="top:951.48px;font-size:16px;font-weight:normal;color:#000;right:660.80px;">0</div>
<div class="t" style="top:951.48px;font-size:16px;font-weight:normal;color:#000;right:538.80px;">0</div>
<div class="t" style="top:951.48px;font-size:16px;font-weight:normal;color:#000;right:416.80px;">0</div>
<div class="t" style="top:951.48px;font-size:16px;font-weight:normal;color:#000;right:294.80px;">0</div>
<div class="t" style="top:951.48px;font-size:16px;font-weight:normal;color:#000;right:172.80px;">0</div>
<div class="t" style="top:951.48px;font-size:16px;font-weight:normal;color:#000;right:50.80px;">0</div>
<div class="t" style="top:975.48px;font-size:16px;font-weight:normal;color:#000;letter-spacing:-0.1px;left:420.00px;">HR &amp; ADMINISTRATION</div>
<div class="t" style="top:975.48px;font-size:16px;font-weight:normal;color:#000;letter-spacing:-0.9px;right:1543.00px;">55,636</div>
<div class="t" style="top:975.48px;font-size:16px;font-weight:normal;color:#000;letter-spacing:-0.9px;right:1394.00px;">41,856</div>
<div class="t" style="top:975.48px;font-size:16px;font-weight:normal;color:#000;letter-spacing:-0.9px;right:1272.00px;">40,147</div>
<div class="t" style="top:975.48px;font-size:16px;font-weight:normal;color:#000;right:1148.80px;">0</div>
<div class="t" style="top:975.48px;font-size:16px;font-weight:normal;color:#000;right:1026.80px;">0</div>
<div class="t" style="top:975.48px;font-size:16px;font-weight:normal;color:#000;right:904.80px;">0</div>
<div class="t" style="top:975.48px;font-size:16px;font-weight:normal;color:#000;right:782.80px;">0</div>
<div class="t" style="top:975.48px;font-size:16px;font-weight:normal;color:#000;right:660.80px;">0</div>
<div class="t" style="top:975.48px;font-size:16px;font-weight:normal;color:#000;right:538.80px;">0</div>
<div class="t" style="top:975.48px;font-size:16px;font-weight:normal;color:#000;right:416.80px;">0</div>
<div class="t" style="top:975.48px;font-size:16px;font-weight:normal;color:#000;right:294.80px;">0</div>
<div class="t" style="top:975.48px;font-size:16px;font-weight:normal;color:#000;right:172.80px;">0</div>
<div class="t" style="top:975.48px;font-size:16px;font-weight:normal;color:#000;right:50.80px;">0</div>
<div class="t" style="top:999.48px;font-size:16px;font-weight:normal;color:#000;letter-spacing:-0.1px;left:420.00px;">PROCUREMENT</div>
<div class="t" style="top:999.48px;font-size:16px;font-weight:normal;color:#000;letter-spacing:-0.9px;right:1543.00px;">0</div>
<div class="t" style="top:999.48px;font-size:16px;font-weight:normal;color:#000;letter-spacing:-0.9px;right:1394.00px;">0</div>
<div class="t" style="top:999.48px;font-size:16px;font-weight:normal;color:#000;letter-spacing:-0.9px;right:1272.00px;">0</div>
<div class="t" style="top:999.48px;font-size:16px;font-weight:normal;color:#000;right:1148.80px;">0</div>
<div class="t" style="top:999.48px;font-size:16px;font-weight:normal;color:#000;right:1026.80px;">0</div>
<div class="t" style="top:999.48px;font-size:16px;font-weight:normal;color:#000;right:904.80px;">0</div>
<div class="t" style="top:999.48px;font-size:16px;font-weight:normal;color:#000;right:782.80px;">0</div>
<div class="t" style="top:999.48px;font-size:16px;font-weight:normal;color:#000;right:660.80px;">0</div>
<div class="t" style="top:999.48px;font-size:16px;font-weight:normal;color:#000;right:538.80px;">0</div>
<div class="t" style="top:999.48px;font-size:16px;font-weight:normal;color:#000;right:416.80px;">0</div>
<div class="t" style="top:999.48px;font-size:16px;font-weight:normal;color:#000;right:294.80px;">0</div>
<div class="t" style="top:999.48px;font-size:16px;font-weight:normal;color:#000;right:172.80px;">0</div>
<div class="t" style="top:999.48px;font-size:16px;font-weight:normal;color:#000;right:50.80px;">0</div>
<div class="t" style="top:1023.48px;font-size:16px;font-weight:normal;color:#000;letter-spacing:-0.1px;left:420.00px;">CALL CENTER</div>
<div class="t" style="top:1023.48px;font-size:16px;font-weight:normal;color:#000;letter-spacing:-0.9px;right:1543.00px;">12,820</div>
<div class="t" style="top:1023.48px;font-size:16px;font-weight:normal;color:#000;letter-spacing:-0.9px;right:1394.00px;">12,384</div>
<div class="t" style="top:1023.48px;font-size:16px;font-weight:normal;color:#000;letter-spacing:-0.9px;right:1272.00px;">12,033</div>
<div class="t" style="top:1023.48px;font-size:16px;font-weight:normal;color:#000;right:1148.80px;">0</div>
<div class="t" style="top:1023.48px;font-size:16px;font-weight:normal;color:#000;right:1026.80px;">0</div>
<div class="t" style="top:1023.48px;font-size:16px;font-weight:normal;color:#000;right:904.80px;">0</div>
<div class="t" style="top:1023.48px;font-size:16px;font-weight:normal;color:#000;right:782.80px;">0</div>
<div class="t" style="top:1023.48px;font-size:16px;font-weight:normal;color:#000;right:660.80px;">0</div>
<div class="t" style="top:1023.48px;font-size:16px;font-weight:normal;color:#000;right:538.80px;">0</div>
<div class="t" style="top:1023.48px;font-size:16px;font-weight:normal;color:#000;right:416.80px;">0</div>
<div class="t" style="top:1023.48px;font-size:16px;font-weight:normal;color:#000;right:294.80px;">0</div>
<div class="t" style="top:1023.48px;font-size:16px;font-weight:normal;color:#000;right:172.80px;">0</div>
<div class="t" style="top:1023.48px;font-size:16px;font-weight:normal;color:#000;right:50.80px;">0</div>
<div class="t" style="top:1047.48px;font-size:16px;font-weight:normal;color:#000;letter-spacing:-0.1px;left:420.00px;">IT OPERATIONS, PRODUCTS, &amp; DEVELOPMENT</div>
<div class="t" style="top:1047.48px;font-size:16px;font-weight:normal;color:#000;letter-spacing:-0.9px;right:1543.00px;">24,172</div>
<div class="t" style="top:1047.48px;font-size:16px;font-weight:normal;color:#000;letter-spacing:-0.9px;right:1394.00px;">40,529</div>
<div class="t" style="top:1047.48px;font-size:16px;font-weight:normal;color:#000;letter-spacing:-0.9px;right:1272.00px;">38,690</div>
<div class="t" style="top:1047.48px;font-size:16px;font-weight:normal;color:#000;right:1148.80px;">0</div>
<div class="t" style="top:1047.48px;font-size:16px;font-weight:normal;color:#000;right:1026.80px;">0</div>
<div class="t" style="top:1047.48px;font-size:16px;font-weight:normal;color:#000;right:904.80px;">0</div>
<div class="t" style="top:1047.48px;font-size:16px;font-weight:normal;color:#000;right:782.80px;">0</div>
<div class="t" style="top:1047.48px;font-size:16px;font-weight:normal;color:#000;right:660.80px;">0</div>
<div class="t" style="top:1047.48px;font-size:16px;font-weight:normal;color:#000;right:538.80px;">0</div>
<div class="t" style="top:1047.48px;font-size:16px;font-weight:normal;color:#000;right:416.80px;">0</div>
<div class="t" style="top:1047.48px;font-size:16px;font-weight:normal;color:#000;right:294.80px;">0</div>
<div class="t" style="top:1047.48px;font-size:16px;font-weight:normal;color:#000;right:172.80px;">0</div>
<div class="t" style="top:1047.48px;font-size:16px;font-weight:normal;color:#000;right:50.80px;">0</div>
<div class="t" style="top:1071.48px;font-size:16px;font-weight:normal;color:#000;letter-spacing:-0.1px;left:420.00px;">SALES</div>
<div class="t" style="top:1071.48px;font-size:16px;font-weight:normal;color:#000;letter-spacing:-0.9px;right:1543.00px;">48,553</div>
<div class="t" style="top:1071.48px;font-size:16px;font-weight:normal;color:#000;letter-spacing:-0.9px;right:1394.00px;">43,832</div>
<div class="t" style="top:1071.48px;font-size:16px;font-weight:normal;color:#000;letter-spacing:-0.9px;right:1272.00px;">46,242</div>
<div class="t" style="top:1071.48px;font-size:16px;font-weight:normal;color:#000;right:1148.80px;">0</div>
<div class="t" style="top:1071.48px;font-size:16px;font-weight:normal;color:#000;right:1026.80px;">0</div>
<div class="t" style="top:1071.48px;font-size:16px;font-weight:normal;color:#000;right:904.80px;">0</div>
<div class="t" style="top:1071.48px;font-size:16px;font-weight:normal;color:#000;right:782.80px;">0</div>
<div class="t" style="top:1071.48px;font-size:16px;font-weight:normal;color:#000;right:660.80px;">0</div>
<div class="t" style="top:1071.48px;font-size:16px;font-weight:normal;color:#000;right:538.80px;">0</div>
<div class="t" style="top:1071.48px;font-size:16px;font-weight:normal;color:#000;right:416.80px;">0</div>
<div class="t" style="top:1071.48px;font-size:16px;font-weight:normal;color:#000;right:294.80px;">0</div>
<div class="t" style="top:1071.48px;font-size:16px;font-weight:normal;color:#000;right:172.80px;">0</div>
<div class="t" style="top:1071.48px;font-size:16px;font-weight:normal;color:#000;right:50.80px;">0</div>
<div class="t" style="top:1095.48px;font-size:16px;font-weight:normal;color:#000;letter-spacing:-0.1px;left:420.00px;">MARKETING</div>
<div class="t" style="top:1095.48px;font-size:16px;font-weight:normal;color:#000;letter-spacing:-0.9px;right:1543.00px;">8,972</div>
<div class="t" style="top:1095.48px;font-size:16px;font-weight:normal;color:#000;letter-spacing:-0.9px;right:1394.00px;">18,252</div>
<div class="t" style="top:1095.48px;font-size:16px;font-weight:normal;color:#000;letter-spacing:-0.9px;right:1272.00px;">23,437</div>
<div class="t" style="top:1095.48px;font-size:16px;font-weight:normal;color:#000;right:1148.80px;">0</div>
<div class="t" style="top:1095.48px;font-size:16px;font-weight:normal;color:#000;right:1026.80px;">0</div>
<div class="t" style="top:1095.48px;font-size:16px;font-weight:normal;color:#000;right:904.80px;">0</div>
<div class="t" style="top:1095.48px;font-size:16px;font-weight:normal;color:#000;right:782.80px;">0</div>
<div class="t" style="top:1095.48px;font-size:16px;font-weight:normal;color:#000;right:660.80px;">0</div>
<div class="t" style="top:1095.48px;font-size:16px;font-weight:normal;color:#000;right:538.80px;">0</div>
<div class="t" style="top:1095.48px;font-size:16px;font-weight:normal;color:#000;right:416.80px;">0</div>
<div class="t" style="top:1095.48px;font-size:16px;font-weight:normal;color:#000;right:294.80px;">0</div>
<div class="t" style="top:1095.48px;font-size:16px;font-weight:normal;color:#000;right:172.80px;">0</div>
<div class="t" style="top:1095.48px;font-size:16px;font-weight:normal;color:#000;right:50.80px;">0</div>
<div class="t" style="top:1119.48px;font-size:16px;font-weight:normal;color:#000;letter-spacing:-0.1px;left:420.00px;">TECHNICAL</div>
<div class="t" style="top:1119.48px;font-size:16px;font-weight:normal;color:#000;letter-spacing:-0.9px;right:1543.00px;">349,459</div>
<div class="t" style="top:1119.48px;font-size:16px;font-weight:normal;color:#000;letter-spacing:-0.9px;right:1394.00px;">347,004</div>
<div class="t" style="top:1119.48px;font-size:16px;font-weight:normal;color:#000;letter-spacing:-0.9px;right:1272.00px;">362,824</div>
<div class="t" style="top:1119.48px;font-size:16px;font-weight:normal;color:#000;right:1148.80px;">0</div>
<div class="t" style="top:1119.48px;font-size:16px;font-weight:normal;color:#000;right:1026.80px;">0</div>
<div class="t" style="top:1119.48px;font-size:16px;font-weight:normal;color:#000;right:904.80px;">0</div>
<div class="t" style="top:1119.48px;font-size:16px;font-weight:normal;color:#000;right:782.80px;">0</div>
<div class="t" style="top:1119.48px;font-size:16px;font-weight:normal;color:#000;right:660.80px;">0</div>
<div class="t" style="top:1119.48px;font-size:16px;font-weight:normal;color:#000;right:538.80px;">0</div>
<div class="t" style="top:1119.48px;font-size:16px;font-weight:normal;color:#000;right:416.80px;">0</div>
<div class="t" style="top:1119.48px;font-size:16px;font-weight:normal;color:#000;right:294.80px;">0</div>
<div class="t" style="top:1119.48px;font-size:16px;font-weight:normal;color:#000;right:172.80px;">0</div>
<div class="t" style="top:1119.48px;font-size:16px;font-weight:normal;color:#000;right:50.80px;">0</div>
<div class="t" style="top:1167.48px;font-size:16px;font-weight:bold;color:#000;letter-spacing:-0.2px;left:420.00px;">DEPRECIATION</div>
<div class="t" style="top:1167.48px;font-size:16px;font-weight:bold;color:#000;letter-spacing:-0.9px;right:1543.00px;">463,237</div>
<div class="t" style="top:1167.48px;font-size:16px;font-weight:bold;color:#000;letter-spacing:-0.9px;right:1394.00px;">462,309</div>
<div class="t" style="top:1167.48px;font-size:16px;font-weight:bold;color:#000;letter-spacing:-0.9px;right:1272.00px;">417,356</div>
<div class="t" style="top:1167.48px;font-size:16px;font-weight:bold;color:#000;right:1148.80px;">0</div>
<div class="t" style="top:1167.48px;font-size:16px;font-weight:bold;color:#000;right:1026.80px;">0</div>
<div class="t" style="top:1167.48px;font-size:16px;font-weight:bold;color:#000;right:904.80px;">0</div>
<div class="t" style="top:1167.48px;font-size:16px;font-weight:bold;color:#000;right:782.80px;">0</div>
<div class="t" style="top:1167.48px;font-size:16px;font-weight:bold;color:#000;right:660.80px;">0</div>
<div class="t" style="top:1167.48px;font-size:16px;font-weight:bold;color:#000;right:538.80px;">0</div>
<div class="t" style="top:1167.48px;font-size:16px;font-weight:bold;color:#000;right:416.80px;">0</div>
<div class="t" style="top:1167.48px;font-size:16px;font-weight:bold;color:#000;right:294.80px;">0</div>
<div class="t" style="top:1167.48px;font-size:16px;font-weight:bold;color:#000;right:172.80px;">0</div>
<div class="t" style="top:1167.48px;font-size:16px;font-weight:bold;color:#000;right:50.80px;">0</div>
<div class="t" style="top:1191.48px;font-size:16px;font-weight:normal;color:#000;letter-spacing:-0.6px;left:52.00px;">01-0000-526205-0000-0000-0000-00</div>
<div class="t" style="top:1191.48px;font-size:16px;font-weight:normal;color:#000;letter-spacing:-0.1px;left:433.50px;">BUILDING</div>
<div class="t" style="top:1191.48px;font-size:16px;font-weight:normal;color:#000;letter-spacing:-0.9px;right:1543.00px;">4,032</div>
<div class="t" style="top:1191.48px;font-size:16px;font-weight:normal;color:#000;letter-spacing:-0.9px;right:1394.00px;">4,032</div>
<div class="t" style="top:1191.48px;font-size:16px;font-weight:normal;color:#000;letter-spacing:-0.9px;right:1272.00px;">3,642</div>
<div class="t" style="top:1191.48px;font-size:16px;font-weight:normal;color:#000;right:1148.80px;">0</div>
<div class="t" style="top:1191.48px;font-size:16px;font-weight:normal;color:#000;right:1026.80px;">0</div>
<div class="t" style="top:1191.48px;font-size:16px;font-weight:normal;color:#000;right:904.80px;">0</div>
<div class="t" style="top:1191.48px;font-size:16px;font-weight:normal;color:#000;right:782.80px;">0</div>
<div class="t" style="top:1191.48px;font-size:16px;font-weight:normal;color:#000;right:660.80px;">0</div>
<div class="t" style="top:1191.48px;font-size:16px;font-weight:normal;color:#000;right:538.80px;">0</div>
<div class="t" style="top:1191.48px;font-size:16px;font-weight:normal;color:#000;right:416.80px;">0</div>
<div class="t" style="top:1191.48px;font-size:16px;font-weight:normal;color:#000;right:294.80px;">0</div>
<div class="t" style="top:1191.48px;font-size:16px;font-weight:normal;color:#000;right:172.80px;">0</div>
<div class="t" style="top:1191.48px;font-size:16px;font-weight:normal;color:#000;right:50.80px;">0</div>
<div class="t" style="top:1215.48px;font-size:16px;font-weight:normal;color:#000;letter-spacing:-0.6px;left:52.00px;">01-0000-526210-0000-0000-0000-00</div>
<div class="t" style="top:1215.48px;font-size:16px;font-weight:normal;color:#000;letter-spacing:-0.1px;left:433.50px;">BILLING SYSTEM</div>
<div class="t" style="top:1215.48px;font-size:16px;font-weight:normal;color:#000;letter-spacing:-0.9px;right:1543.00px;">17,047</div>
<div class="t" style="top:1215.48px;font-size:16px;font-weight:normal;color:#000;letter-spacing:-0.9px;right:1394.00px;">17,047</div>
<div class="t" style="top:1215.48px;font-size:16px;font-weight:normal;color:#000;letter-spacing:-0.9px;right:1272.00px;">15,398</div>
<div class="t" style="top:1215.48px;font-size:16px;font-weight:normal;color:#000;right:1148.80px;">0</div>
<div class="t" style="top:1215.48px;font-size:16px;font-weight:normal;color:#000;right:1026.80px;">0</div>
<div class="t" style="top:1215.48px;font-size:16px;font-weight:normal;color:#000;right:904.80px;">0</div>
<div class="t" style="top:1215.48px;font-size:16px;font-weight:normal;color:#000;right:782.80px;">0</div>
<div class="t" style="top:1215.48px;font-size:16px;font-weight:normal;color:#000;right:660.80px;">0</div>
<div class="t" style="top:1215.48px;font-size:16px;font-weight:normal;color:#000;right:538.80px;">0</div>
<div class="t" style="top:1215.48px;font-size:16px;font-weight:normal;color:#000;right:416.80px;">0</div>
<div class="t" style="top:1215.48px;font-size:16px;font-weight:normal;color:#000;right:294.80px;">0</div>
<div class="t" style="top:1215.48px;font-size:16px;font-weight:normal;color:#000;right:172.80px;">0</div>
<div class="t" style="top:1215.48px;font-size:16px;font-weight:normal;color:#000;right:50.80px;">0</div>
<div class="t" style="top:1239.48px;font-size:16px;font-weight:normal;color:#000;letter-spacing:-0.6px;left:52.00px;">01-0000-526215-0000-0000-0000-00</div>
<div class="t" style="top:1239.48px;font-size:16px;font-weight:normal;color:#000;letter-spacing:-0.1px;left:433.50px;">COMPUTERS &amp; OFFICE EQUIPMENT</div>
<div class="t" style="top:1239.48px;font-size:16px;font-weight:normal;color:#000;letter-spacing:-0.9px;right:1543.00px;">10,384</div>
<div class="t" style="top:1239.48px;font-size:16px;font-weight:normal;color:#000;letter-spacing:-0.9px;right:1394.00px;">10,064</div>
<div class="t" style="top:1239.48px;font-size:16px;font-weight:normal;color:#000;letter-spacing:-0.9px;right:1272.00px;">8,823</div>
<div class="t" style="top:1239.48px;font-size:16px;font-weight:normal;color:#000;right:1148.80px;">0</div>
<div class="t" style="top:1239.48px;font-size:16px;font-weight:normal;color:#000;right:1026.80px;">0</div>
<div class="t" style="top:1239.48px;font-size:16px;font-weight:normal;color:#000;right:904.80px;">0</div>
<div class="t" style="top:1239.48px;font-size:16px;font-weight:normal;color:#000;right:782.80px;">0</div>
<div class="t" style="top:1239.48px;font-size:16px;font-weight:normal;color:#000;right:660.80px;">0</div>
<div class="t" style="top:1239.48px;font-size:16px;font-weight:normal;color:#000;right:538.80px;">0</div>
<div class="t" style="top:1239.48px;font-size:16px;font-weight:normal;color:#000;right:416.80px;">0</div>
<div class="t" style="top:1239.48px;font-size:16px;font-weight:normal;color:#000;right:294.80px;">0</div>
<div class="t" style="top:1239.48px;font-size:16px;font-weight:normal;color:#000;right:172.80px;">0</div>
<div class="t" style="top:1239.48px;font-size:16px;font-weight:normal;color:#000;right:50.80px;">0</div>
<div class="t" style="top:1263.48px;font-size:16px;font-weight:normal;color:#000;letter-spacing:-0.6px;left:52.00px;">01-0000-526220-0000-0000-0000-00</div>
<div class="t" style="top:1263.48px;font-size:16px;font-weight:normal;color:#000;letter-spacing:-0.1px;left:433.50px;">FURNITURE &amp; FIXTURES</div>
<div class="t" style="top:1263.48px;font-size:16px;font-weight:normal;color:#000;letter-spacing:-0.9px;right:1543.00px;">4,548</div>
<div class="t" style="top:1263.48px;font-size:16px;font-weight:normal;color:#000;letter-spacing:-0.9px;right:1394.00px;">4,548</div>
<div class="t" style="top:1263.48px;font-size:16px;font-weight:normal;color:#000;letter-spacing:-0.9px;right:1272.00px;">4,108</div>
<div class="t" style="top:1263.48px;font-size:16px;font-weight:normal;color:#000;right:1148.80px;">0</div>
<div class="t" style="top:1263.48px;font-size:16px;font-weight:normal;color:#000;right:1026.80px;">0</div>
<div class="t" style="top:1263.48px;font-size:16px;font-weight:normal;color:#000;right:904.80px;">0</div>
<div class="t" style="top:1263.48px;font-size:16px;font-weight:normal;color:#000;right:782.80px;">0</div>
<div class="t" style="top:1263.48px;font-size:16px;font-weight:normal;color:#000;right:660.80px;">0</div>
<div class="t" style="top:1263.48px;font-size:16px;font-weight:normal;color:#000;right:538.80px;">0</div>
<div class="t" style="top:1263.48px;font-size:16px;font-weight:normal;color:#000;right:416.80px;">0</div>
<div class="t" style="top:1263.48px;font-size:16px;font-weight:normal;color:#000;right:294.80px;">0</div>
<div class="t" style="top:1263.48px;font-size:16px;font-weight:normal;color:#000;right:172.80px;">0</div>
<div class="t" style="top:1263.48px;font-size:16px;font-weight:normal;color:#000;right:50.80px;">0</div>
<div class="t" style="top:1287.48px;font-size:16px;font-weight:normal;color:#000;letter-spacing:-0.6px;left:52.00px;">01-0000-526225-0000-0000-0000-00</div>
<div class="t" style="top:1287.48px;font-size:16px;font-weight:normal;color:#000;letter-spacing:-0.1px;left:433.50px;">VEHICLE DEPRECIATION</div>
<div class="t" style="top:1287.48px;font-size:16px;font-weight:normal;color:#000;letter-spacing:-0.9px;right:1543.00px;">8,530</div>
<div class="t" style="top:1287.48px;font-size:16px;font-weight:normal;color:#000;letter-spacing:-0.9px;right:1394.00px;">8,530</div>
<div class="t" style="top:1287.48px;font-size:16px;font-weight:normal;color:#000;letter-spacing:-0.9px;right:1272.00px;">7,704</div>
<div class="t" style="top:1287.48px;font-size:16px;font-weight:normal;color:#000;right:1148.80px;">0</div>
<div class="t" style="top:1287.48px;font-size:16px;font-weight:normal;color:#000;right:1026.80px;">0</div>
<div class="t" style="top:1287.48px;font-size:16px;font-weight:normal;color:#000;right:904.80px;">0</div>
<div class="t" style="top:1287.48px;font-size:16px;font-weight:normal;color:#000;right:782.80px;">0</div>
<div class="t" style="top:1287.48px;font-size:16px;font-weight:normal;color:#000;right:660.80px;">0</div>
<div class="t" style="top:1287.48px;font-size:16px;font-weight:normal;color:#000;right:538.80px;">0</div>
<div class="t" style="top:1287.48px;font-size:16px;font-weight:normal;color:#000;right:416.80px;">0</div>
<div class="t" style="top:1287.48px;font-size:16px;font-weight:normal;color:#000;right:294.80px;">0</div>
<div class="t" style="top:1287.48px;font-size:16px;font-weight:normal;color:#000;right:172.80px;">0</div>
<div class="t" style="top:1287.48px;font-size:16px;font-weight:normal;color:#000;right:50.80px;">0</div>
<div class="t" style="top:1311.48px;font-size:16px;font-weight:normal;color:#000;letter-spacing:-0.6px;left:52.00px;">01-0000-526230-0000-0000-0000-00</div>
<div class="t" style="top:1311.48px;font-size:16px;font-weight:normal;color:#000;letter-spacing:-0.1px;left:433.50px;">iDEN NETWORK</div>
<div class="t" style="top:1311.48px;font-size:16px;font-weight:normal;color:#000;letter-spacing:-0.9px;right:1543.00px;">233,108</div>
<div class="t" style="top:1311.48px;font-size:16px;font-weight:normal;color:#000;letter-spacing:-0.9px;right:1394.00px;">232,661</div>
<div class="t" style="top:1311.48px;font-size:16px;font-weight:normal;color:#000;letter-spacing:-0.9px;right:1272.00px;">210,228</div>
<div class="t" style="top:1311.48px;font-size:16px;font-weight:normal;color:#000;right:1148.80px;">0</div>
<div class="t" style="top:1311.48px;font-size:16px;font-weight:normal;color:#000;right:1026.80px;">0</div>
<div class="t" style="top:1311.48px;font-size:16px;font-weight:normal;color:#000;right:904.80px;">0</div>
<div class="t" style="top:1311.48px;font-size:16px;font-weight:normal;color:#000;right:782.80px;">0</div>
<div class="t" style="top:1311.48px;font-size:16px;font-weight:normal;color:#000;right:660.80px;">0</div>
<div class="t" style="top:1311.48px;font-size:16px;font-weight:normal;color:#000;right:538.80px;">0</div>
<div class="t" style="top:1311.48px;font-size:16px;font-weight:normal;color:#000;right:416.80px;">0</div>
<div class="t" style="top:1311.48px;font-size:16px;font-weight:normal;color:#000;right:294.80px;">0</div>
<div class="t" style="top:1311.48px;font-size:16px;font-weight:normal;color:#000;right:172.80px;">0</div>
<div class="t" style="top:1311.48px;font-size:16px;font-weight:normal;color:#000;right:50.80px;">0</div>
<div class="t" style="top:1335.48px;font-size:16px;font-weight:normal;color:#000;letter-spacing:-0.6px;left:52.00px;">01-0000-526260-0000-0000-0000-00</div>
<div class="t" style="top:1335.48px;font-size:16px;font-weight:normal;color:#000;letter-spacing:-0.1px;left:433.50px;">iDEN NETWORK CONSTRUCTION</div>
<div class="t" style="top:1335.48px;font-size:16px;font-weight:normal;color:#000;letter-spacing:-0.9px;right:1543.00px;">0</div>
<div class="t" style="top:1335.48px;font-size:16px;font-weight:normal;color:#000;letter-spacing:-0.9px;right:1394.00px;">0</div>
<div class="t" style="top:1335.48px;font-size:16px;font-weight:normal;color:#000;letter-spacing:-0.9px;right:1272.00px;">0</div>
<div class="t" style="top:1335.48px;font-size:16px;font-weight:normal;color:#000;right:1148.80px;">0</div>
<div class="t" style="top:1335.48px;font-size:16px;font-weight:normal;color:#000;right:1026.80px;">0</div>
<div class="t" style="top:1335.48px;font-size:16px;font-weight:normal;color:#000;right:904.80px;">0</div>
<div class="t" style="top:1335.48px;font-size:16px;font-weight:normal;color:#000;right:782.80px;">0</div>
<div class="t" style="top:1335.48px;font-size:16px;font-weight:normal;color:#000;right:660.80px;">0</div>
<div class="t" style="top:1335.48px;font-size:16px;font-weight:normal;color:#000;right:538.80px;">0</div>
<div class="t" style="top:1335.48px;font-size:16px;font-weight:normal;color:#000;right:416.80px;">0</div>
<div class="t" style="top:1335.48px;font-size:16px;font-weight:normal;color:#000;right:294.80px;">0</div>
<div class="t" style="top:1335.48px;font-size:16px;font-weight:normal;color:#000;right:172.80px;">0</div>
<div class="t" style="top:1335.48px;font-size:16px;font-weight:normal;color:#000;right:50.80px;">0</div>
<div class="t" style="top:1359.48px;font-size:16px;font-weight:normal;color:#000;letter-spacing:-0.6px;left:52.00px;">01-0000-526265-0000-0000-0000-00</div>
<div class="t" style="top:1359.48px;font-size:16px;font-weight:normal;color:#000;letter-spacing:-0.1px;left:433.50px;">ACCOUNTING SOFTWARE</div>
<div class="t" style="top:1359.48px;font-size:16px;font-weight:normal;color:#000;letter-spacing:-0.9px;right:1543.00px;">1,607</div>
<div class="t" style="top:1359.48px;font-size:16px;font-weight:normal;color:#000;letter-spacing:-0.9px;right:1394.00px;">1,607</div>
<div class="t" style="top:1359.48px;font-size:16px;font-weight:normal;color:#000;letter-spacing:-0.9px;right:1272.00px;">1,452</div>
<div class="t" style="top:1359.48px;font-size:16px;font-weight:normal;color:#000;right:1148.80px;">0</div>
<div class="t" style="top:1359.48px;font-size:16px;font-weight:normal;color:#000;right:1026.80px;">0</div>
<div class="t" style="top:1359.48px;font-size:16px;font-weight:normal;color:#000;right:904.80px;">0</div>
<div class="t" style="top:1359.48px;font-size:16px;font-weight:normal;color:#000;right:782.80px;">0</div>
<div class="t" style="top:1359.48px;font-size:16px;font-weight:normal;color:#000;right:660.80px;">0</div>
<div class="t" style="top:1359.48px;font-size:16px;font-weight:normal;color:#000;right:538.80px;">0</div>
<div class="t" style="top:1359.48px;font-size:16px;font-weight:normal;color:#000;right:416.80px;">0</div>
<div class="t" style="top:1359.48px;font-size:16px;font-weight:normal;color:#000;right:294.80px;">0</div>
<div class="t" style="top:1359.48px;font-size:16px;font-weight:normal;color:#000;right:172.80px;">0</div>
<div class="t" style="top:1359.48px;font-size:16px;font-weight:normal;color:#000;right:50.80px;">0</div>
<div class="t" style="top:1383.48px;font-size:16px;font-weight:normal;color:#000;letter-spacing:-0.6px;left:52.00px;">01-0000-526275-0000-0000-0000-00</div>
<div class="t" style="top:1383.48px;font-size:16px;font-weight:normal;color:#000;letter-spacing:-0.1px;left:433.50px;">OTHER SOFTWARE DEPRECIATION</div>
<div class="t" style="top:1383.48px;font-size:16px;font-weight:normal;color:#000;letter-spacing:-0.9px;right:1543.00px;">3,733</div>
<div class="t" style="top:1383.48px;font-size:16px;font-weight:normal;color:#000;letter-spacing:-0.9px;right:1394.00px;">3,573</div>
<div class="t" style="top:1383.48px;font-size:16px;font-weight:normal;color:#000;letter-spacing:-0.9px;right:1272.00px;">3,226</div>
<div class="t" style="top:1383.48px;font-size:16px;font-weight:normal;color:#000;right:1148.80px;">0</div>
<div class="t" style="top:1383.48px;font-size:16px;font-weight:normal;color:#000;right:1026.80px;">0</div>
<div class="t" style="top:1383.48px;font-size:16px;font-weight:normal;color:#000;right:904.80px;">0</div>
<div class="t" style="top:1383.48px;font-size:16px;font-weight:normal;color:#000;right:782.80px;">0</div>
<div class="t" style="top:1383.48px;font-size:16px;font-weight:normal;color:#000;right:660.80px;">0</div>
<div class="t" style="top:1383.48px;font-size:16px;font-weight:normal;color:#000;right:538.80px;">0</div>
<div class="t" style="top:1383.48px;font-size:16px;font-weight:normal;color:#000;right:416.80px;">0</div>
<div class="t" style="top:1383.48px;font-size:16px;font-weight:normal;color:#000;right:294.80px;">0</div>
<div class="t" style="top:1383.48px;font-size:16px;font-weight:normal;color:#000;right:172.80px;">0</div>
<div class="t" style="top:1383.48px;font-size:16px;font-weight:normal;color:#000;right:50.80px;">0</div>
<div class="t" style="top:1407.48px;font-size:16px;font-weight:normal;color:#000;letter-spacing:-0.6px;left:52.00px;">01-0000-526280-0000-0000-0000-00</div>
<div class="t" style="top:1407.48px;font-size:16px;font-weight:normal;color:#000;letter-spacing:-0.1px;left:433.50px;">MSO Dep Exp</div>
<div class="t" style="top:1407.48px;font-size:16px;font-weight:normal;color:#000;letter-spacing:-0.9px;right:1543.00px;">119,946</div>
<div class="t" style="top:1407.48px;font-size:16px;font-weight:normal;color:#000;letter-spacing:-0.9px;right:1394.00px;">119,946</div>
<div class="t" style="top:1407.48px;font-size:16px;font-weight:normal;color:#000;letter-spacing:-0.9px;right:1272.00px;">108,338</div>
<div class="t" style="top:1407.48px;font-size:16px;font-weight:normal;color:#000;right:1148.80px;">0</div>
<div class="t" style="top:1407.48px;font-size:16px;font-weight:normal;color:#000;right:1026.80px;">0</div>
<div class="t" style="top:1407.48px;font-size:16px;font-weight:normal;color:#000;right:904.80px;">0</div>
<div class="t" style="top:1407.48px;font-size:16px;font-weight:normal;color:#000;right:782.80px;">0</div>
<div class="t" style="top:1407.48px;font-size:16px;font-weight:normal;color:#000;right:660.80px;">0</div>
<div class="t" style="top:1407.48px;font-size:16px;font-weight:normal;color:#000;right:538.80px;">0</div>
<div class="t" style="top:1407.48px;font-size:16px;font-weight:normal;color:#000;right:416.80px;">0</div>
<div class="t" style="top:1407.48px;font-size:16px;font-weight:normal;color:#000;right:294.80px;">0</div>
<div class="t" style="top:1407.48px;font-size:16px;font-weight:normal;color:#000;right:172.80px;">0</div>
<div class="t" style="top:1407.48px;font-size:16px;font-weight:normal;color:#000;right:50.80px;">0</div>
<div class="t" style="top:1431.48px;font-size:16px;font-weight:normal;color:#000;letter-spacing:-0.6px;left:52.00px;">01-0000-526270-0000-0000-0000-00</div>
<div class="t" style="top:1431.48px;font-size:16px;font-weight:normal;color:#000;letter-spacing:-0.1px;left:433.50px;">Civil Work (Sites) D</div>
<div class="t" style="top:1431.48px;font-size:16px;font-weight:normal;color:#000;letter-spacing:-0.9px;right:1543.00px;">59,674</div>
<div class="t" style="top:1431.48px;font-size:16px;font-weight:normal;color:#000;letter-spacing:-0.9px;right:1394.00px;">59,674</div>
<div class="t" style="top:1431.48px;font-size:16px;font-weight:normal;color:#000;letter-spacing:-0.9px;right:1272.00px;">53,869</div>
<div class="t" style="top:1431.48px;font-size:16px;font-weight:normal;color:#000;right:1148.80px;">0</div>
<div class="t" style="top:1431.48px;font-size:16px;font-weight:normal;color:#000;right:1026.80px;">0</div>
<div class="t" style="top:1431.48px;font-size:16px;font-weight:normal;color:#000;right:904.80px;">0</div>
<div class="t" style="top:1431.48px;font-size:16px;font-weight:normal;color:#000;right:782.80px;">0</div>
<div class="t" style="top:1431.48px;font-size:16px;font-weight:normal;color:#000;right:660.80px;">0</div>
<div class="t" style="top:1431.48px;font-size:16px;font-weight:normal;color:#000;right:538.80px;">0</div>
<div class="t" style="top:1431.48px;font-size:16px;font-weight:normal;color:#000;right:416.80px;">0</div>
<div class="t" style="top:1431.48px;font-size:16px;font-weight:normal;color:#000;right:294.80px;">0</div>
<div class="t" style="top:1431.48px;font-size:16px;font-weight:normal;color:#000;right:172.80px;">0</div>
<div class="t" style="top:1431.48px;font-size:16px;font-weight:normal;color:#000;right:50.80px;">0</div>
<div class="t" style="top:1455.48px;font-size:16px;font-weight:normal;color:#000;letter-spacing:-0.6px;left:52.00px;">01-0000-526206-0000-0000-0000-00</div>
<div class="t" style="top:1455.48px;font-size:16px;font-weight:normal;color:#000;letter-spacing:-0.1px;left:433.50px;">ADVISORY FEES</div>
<div class="t" style="top:1455.48px;font-size:16px;font-weight:normal;color:#000;letter-spacing:-0.9px;right:1543.00px;">518</div>
<div class="t" style="top:1455.48px;font-size:16px;font-weight:normal;color:#000;letter-spacing:-0.9px;right:1394.00px;">518</div>
<div class="t" style="top:1455.48px;font-size:16px;font-weight:normal;color:#000;letter-spacing:-0.9px;right:1272.00px;">468</div>
<div class="t" style="top:1455.48px;font-size:16px;font-weight:normal;color:#000;right:1148.80px;">0</div>
<div class="t" style="top:1455.48px;font-size:16px;font-weight:normal;color:#000;right:1026.80px;">0</div>
<div class="t" style="top:1455.48px;font-size:16px;font-weight:normal;color:#000;right:904.80px;">0</div>
<div class="t" style="top:1455.48px;font-size:16px;font-weight:normal;color:#000;right:782.80px;">0</div>
<div class="t" style="top:1455.48px;font-size:16px;font-weight:normal;color:#000;right:660.80px;">0</div>
<div class="t" style="top:1455.48px;font-size:16px;font-weight:normal;color:#000;right:538.80px;">0</div>
<div class="t" style="top:1455.48px;font-size:16px;font-weight:normal;color:#000;right:416.80px;">0</div>
<div class="t" style="top:1455.48px;font-size:16px;font-weight:normal;color:#000;right:294.80px;">0</div>
<div class="t" style="top:1455.48px;font-size:16px;font-weight:normal;color:#000;right:172.80px;">0</div>
<div class="t" style="top:1455.48px;font-size:16px;font-weight:normal;color:#000;right:50.80px;">0</div>
<div class="t" style="top:1143.48px;font-size:16px;font-weight:normal;color:#000;right:904.80px;">0</div>
<div class="r" style="left:36px;top:498px;width:352px;height:2px;background:#000;"></div>
<div class="r" style="left:402px;top:498px;width:488px;height:2px;background:#000;"></div>
<div class="r" style="left:900px;top:498px;width:124px;height:2px;background:#000;"></div>
<div class="r" style="left:1050px;top:498px;width:1480px;height:2px;background:#000;"></div>
<div class="r" style="left:386px;top:498px;width:2px;height:964px;background:#000;"></div>
<div class="r" style="left:402px;top:498px;width:2px;height:964px;background:#000;"></div>
<div class="r" style="left:888px;top:498px;width:2px;height:964px;background:#000;"></div>
<div class="r" style="left:900px;top:498px;width:2px;height:964px;background:#000;"></div>
<div class="r" style="left:1022px;top:498px;width:2px;height:964px;background:#000;"></div>
<div class="r" style="left:1050px;top:498px;width:2px;height:964px;background:#000;"></div>
<div class="r" style="left:1172px;top:498px;width:2px;height:964px;background:#000;"></div>
<div class="r" style="left:1294px;top:498px;width:2px;height:964px;background:#000;"></div>
<div class="r" style="left:1416px;top:498px;width:2px;height:964px;background:#000;"></div>
<div class="r" style="left:1538px;top:498px;width:2px;height:964px;background:#000;"></div>
<div class="r" style="left:1660px;top:498px;width:2px;height:964px;background:#000;"></div>
<div class="r" style="left:1782px;top:498px;width:2px;height:964px;background:#000;"></div>
<div class="r" style="left:1904px;top:498px;width:2px;height:964px;background:#000;"></div>
<div class="r" style="left:2026px;top:498px;width:2px;height:964px;background:#000;"></div>
<div class="r" style="left:2148px;top:498px;width:2px;height:964px;background:#000;"></div>
<div class="r" style="left:2270px;top:498px;width:2px;height:964px;background:#000;"></div>
<div class="r" style="left:2392px;top:498px;width:2px;height:964px;background:#000;"></div>
<div class="r" style="left:2514px;top:498px;width:2px;height:964px;background:#000;"></div>
<div class="r" style="left:0px;top:538px;width:2530px;height:2px;background:#a3a3a3;"></div>
<div class="r" style="left:1034px;top:344px;width:2px;height:1118px;background:#a3a3a3;"></div>
<div class="r" style="left:400px;top:440.5px;width:492px;height:37px;background:transparent;border:4px solid #217346;box-sizing:border-box;"></div>
<div class="r" style="left:404px;top:444.5px;width:484px;height:29px;background:transparent;border:1px solid #fff;box-sizing:border-box;"></div>
<div class="r" style="left:882px;top:467px;width:13px;height:13px;background:#217346;border:1.5px solid #fff;box-sizing:border-box;"></div>
<div class="r" style="left:883px;top:468px;width:12px;height:12px;background:#217346;"></div>
<svg class="s" style="left:690px;top:1018px;" width="34" height="34" viewBox="0 0 34 34"><path d="M12 2 H21 V12 H32 V21 H21 V32 H12 V21 H2 V12 H12 Z" fill="#fff" filter="drop-shadow(0 1px 1px rgba(0,0,0,.35))"/><path d="M14 4 H19 V14 H30 V19 H19 V30 H14 V19 H4 V14 H14 Z" fill="#fff" stroke="#000" stroke-width="2.4"/></svg>
<div class="r" style="left:2530px;top:344px;width:30px;height:1118px;background:#f8f8f8;border-left:1.5px solid #e6e6e6;box-sizing:border-box;"></div>
<div class="r" style="left:2538px;top:347.5px;width:18px;height:689px;background:#b9b9b9;border-radius:9px;"></div>
<div class="r" style="left:0px;top:1462px;width:2560px;height:30px;background:#f8f8f8;"></div>
<div class="r" style="left:0px;top:1462px;width:2530px;height:1px;background:#e8e8e8;"></div>
<div class="r" style="left:4px;top:1470px;width:1996px;height:18px;background:#b9b9b9;border-radius:9px;"></div>
<div class="r" style="left:2530px;top:1462px;width:1.5px;height:30px;background:#e6e6e6;"></div>
<div class="r" style="left:0px;top:1490px;width:2560px;height:2px;background:#e4e4e4;"></div>
<div class="r" style="left:0px;top:1492px;width:2560px;height:53px;background:#f2f2f2;"></div>
<div class="r" style="left:0px;top:1544px;width:2560px;height:2px;background:#cbcbcb;"></div>
<svg class="s" style="left:29px;top:1508px;" width="16" height="22" viewBox="0 0 16 22"><path d="M14 1 V21 L1 11 Z" fill="#b0b0b0" stroke="#b0b0b0" stroke-width="1.5" stroke-linejoin="round"/></svg>
<svg class="s" style="left:75px;top:1508px;" width="16" height="22" viewBox="0 0 16 22"><path d="M2 1 V21 L15 11 Z" fill="#5a5a5a" stroke="#5a5a5a" stroke-width="1.5" stroke-linejoin="round"/></svg>
<div class="r" style="left:120px;top:1494px;width:2px;height:40px;background:#d4d4d4;"></div>
<div class="r" style="left:324px;top:1494px;width:2px;height:40px;background:#d4d4d4;"></div>
<div class="r" style="left:504px;top:1494px;width:2px;height:40px;background:#d4d4d4;"></div>
<div class="r" style="left:670px;top:1494px;width:2px;height:40px;background:#d4d4d4;"></div>
<div class="r" style="left:828px;top:1494px;width:2px;height:40px;background:#d4d4d4;"></div>
<div class="r" style="left:986px;top:1494px;width:2px;height:40px;background:#d4d4d4;"></div>
<div class="r" style="left:1144px;top:1494px;width:2px;height:40px;background:#d4d4d4;"></div>
<div class="r" style="left:1354px;top:1494px;width:2px;height:40px;background:#d4d4d4;"></div>
<div class="r" style="left:2074px;top:1494px;width:2px;height:40px;background:#d4d4d4;"></div>
<div class="r" style="left:2252px;top:1494px;width:2px;height:40px;background:#d4d4d4;"></div>
<div class="r" style="left:2422px;top:1494px;width:2px;height:40px;background:#d4d4d4;"></div>
<div class="r" style="left:2499px;top:1494px;width:2px;height:40px;background:#d4d4d4;"></div>
<div class="t" style="top:1507.14px;font-size:23.5px;font-weight:normal;color:#585858;letter-spacing:0.2px;left:72.50px;width:300px;text-align:center;-webkit-text-stroke:0.45px #585858;">ACCOUNTS</div>
<div class="t" style="top:1507.14px;font-size:23.5px;font-weight:normal;color:#585858;letter-spacing:0.2px;left:265.50px;width:300px;text-align:center;-webkit-text-stroke:0.45px #585858;">P&amp;L M NF</div>
<div class="t" style="top:1507.14px;font-size:23.5px;font-weight:normal;color:#585858;letter-spacing:0.2px;left:437.95px;width:300px;text-align:center;-webkit-text-stroke:0.45px #585858;">P&amp;L YTD</div>
<div class="t" style="top:1507.14px;font-size:23.5px;font-weight:normal;color:#585858;letter-spacing:0.2px;left:599.70px;width:300px;text-align:center;-webkit-text-stroke:0.45px #585858;">BS</div>
<div class="t" style="top:1507.14px;font-size:23.5px;font-weight:normal;color:#585858;letter-spacing:0.2px;left:757.50px;width:300px;text-align:center;-webkit-text-stroke:0.45px #585858;">CF M</div>
<div class="t" style="top:1507.14px;font-size:23.5px;font-weight:normal;color:#585858;letter-spacing:0.2px;left:915.30px;width:300px;text-align:center;-webkit-text-stroke:0.45px #585858;">CF</div>
<div class="t" style="top:1507.14px;font-size:23.5px;font-weight:normal;color:#585858;letter-spacing:0.2px;left:1099.30px;width:300px;text-align:center;-webkit-text-stroke:0.45px #585858;">REVENUE M</div>
<div class="t" style="top:1507.14px;font-size:23.5px;font-weight:normal;color:#585858;letter-spacing:0.2px;left:1323.50px;width:300px;text-align:center;-webkit-text-stroke:0.45px #585858;">REVENUE YTD</div>
<div class="t" style="top:1507.14px;font-size:23.5px;font-weight:normal;color:#585858;letter-spacing:0.2px;left:1794.50px;width:300px;text-align:center;-webkit-text-stroke:0.45px #585858;">EXPENSES YTD</div>
<div class="t" style="top:1507.14px;font-size:23.5px;font-weight:normal;color:#585858;letter-spacing:0.2px;left:2013.50px;width:300px;text-align:center;-webkit-text-stroke:0.45px #585858;">OPEX - M</div>
<div class="t" style="top:1507.14px;font-size:23.5px;font-weight:normal;color:#585858;letter-spacing:0.2px;left:2197.00px;width:300px;text-align:center;-webkit-text-stroke:0.45px #585858;">OPEX YTD</div>
<div class="r" style="left:2380px;top:1500px;width:40px;height:36px;background:linear-gradient(90deg,rgba(242,242,242,0),rgba(242,242,242,.9));"></div>
<div class="r" style="left:1593px;top:1490px;width:227px;height:47px;background:#fff;border-radius:0 0 6px 6px;box-shadow:0 0 0 1px #cfcfcf, 0 1.5px 1.5px rgba(0,0,0,.18);"></div>
<div class="t" style="top:1506.02px;font-size:24px;font-weight:bold;color:#1e8a4c;left:1556.50px;width:300px;text-align:center;">EXPENSES M</div>
<svg class="s" style="left:2451px;top:1506px;" width="24" height="24" viewBox="0 0 24 24"><path d="M12 2 V22 M2 12 H22" stroke="#4a4a4a" stroke-width="3.6"/></svg>
<div class="r" style="left:0px;top:1546px;width:2560px;height:54px;background:#f3f3f3;"></div>
<div class="t" style="top:1560.17px;font-size:25px;font-weight:normal;color:#4a4a4a;left:29.00px;">Select destination and press ENTER or choose Paste</div>
<div class="r" style="left:1928px;top:1550px;width:62px;height:44px;background:#b8b8b8;border-radius:7px;"></div>
<svg class="s" style="left:1943px;top:1557px;" width="30" height="30" viewBox="0 0 30 30"><rect x="0" y="0" width="30" height="30" rx="5" fill="#3e3e3e"/><path d="M10 0 V30 M20 0 V30 M0 10 H30 M0 20 H30" stroke="#b8b8b8" stroke-width="2.2"/></svg>
<svg class="s" style="left:2019px;top:1556px;" width="27" height="33" viewBox="0 0 27 33"><path d="M5 2 H16 L25 11 V28 Q25 31 22 31 H5 Q2 31 2 28 V5 Q2 2 5 2Z" fill="none" stroke="#444" stroke-width="2.2"/><path d="M16 2 V11 H25" fill="none" stroke="#444" stroke-width="2"/><rect x="6.5" y="17" width="14" height="10" fill="none" stroke="#444" stroke-width="2"/><path d="M6.5 22 H20.5 M11 17 V27" stroke="#444" stroke-width="1.8"/></svg>
<svg class="s" style="left:2088px;top:1555px;" width="32" height="34" viewBox="0 0 32 34"><path d="M4 1 V8 H27 V1 M4 33 V24 H27 V33" fill="none" stroke="#444" stroke-width="2.2"/><path d="M1 16.5 H31" stroke="#444" stroke-width="2" stroke-dasharray="3.5 2.5"/></svg>
<div class="r" style="left:2154px;top:1571px;width:16px;height:2.4px;background:#555;"></div>
<div class="r" style="left:2184px;top:1569px;width:200px;height:8px;background:#ababab;border-radius:4px;"></div>
<div class="r" style="left:2249px;top:1556px;width:32px;height:32px;background:#fff;border-radius:16px;box-shadow:0 0 0 1px #d0d0d0,0 1px 2px rgba(0,0,0,.2);"></div>
<svg class="s" style="left:2397px;top:1563px;" width="18" height="18" viewBox="0 0 18 18"><path d="M9 0 V18 M0 9 H18" stroke="#555" stroke-width="2.4"/></svg>
<div class="t" style="top:1560.72px;font-size:24px;font-weight:normal;color:#555;letter-spacing:1.5px;left:2455.00px;">80%</div>
</body></html>
